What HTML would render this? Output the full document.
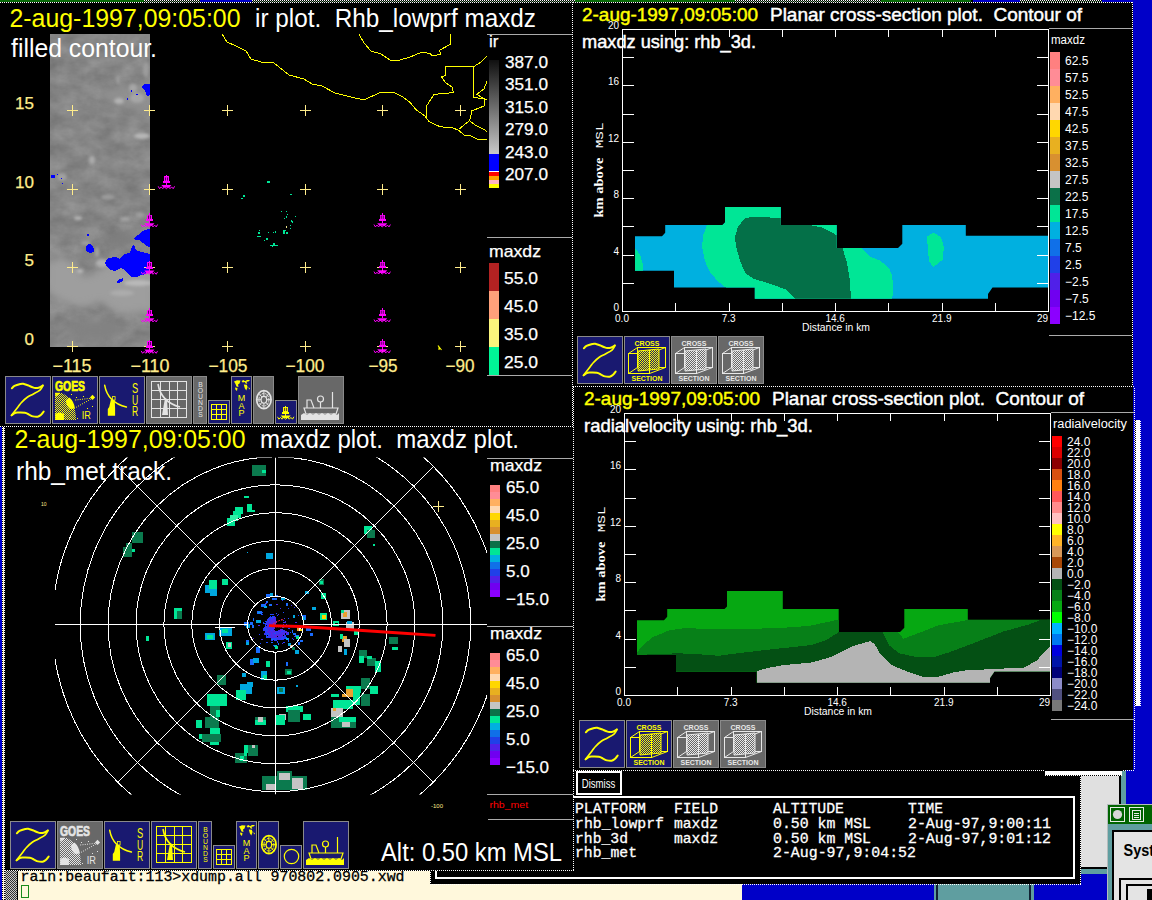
<!DOCTYPE html>
<html><head><meta charset="utf-8"><title>zebra</title>
<style>
html,body{margin:0;padding:0;background:#000;overflow:hidden}
body{width:1152px;height:900px;font-family:"Liberation Sans",sans-serif}
svg{display:block;position:absolute;left:0;top:0}
text{white-space:pre}
</style></head><body>
<svg width="1152" height="900" viewBox="0 0 1152 900">
<rect x="0" y="0" width="1152" height="900" fill="#000" />
<rect x="1133" y="0" width="19" height="806" fill="#0000c8" />
<rect x="0" y="0" width="144" height="2" fill="#0a6a0a" />
<rect x="200" y="0" width="52" height="2" fill="#0000c8" />
<rect x="575" y="0" width="160" height="2" fill="#0a6a0a" />
<rect x="881" y="0" width="90" height="2" fill="#0a6a0a" />
<rect x="973" y="0" width="47" height="2" fill="#0000c8" />
<rect x="1102" y="0" width="50" height="2" fill="#0000c8" />
<line x1="144" y1="0.5" x2="200" y2="0.5" stroke="#fff" stroke-width="1" stroke-dasharray="1,1"/>
<line x1="145" y1="1.5" x2="200" y2="1.5" stroke="#7a7" stroke-width="1" stroke-dasharray="1,1"/>
<line x1="252" y1="0.5" x2="575" y2="0.5" stroke="#fff" stroke-width="1" stroke-dasharray="1,1"/>
<line x1="253" y1="1.5" x2="575" y2="1.5" stroke="#7a7" stroke-width="1" stroke-dasharray="1,1"/>
<line x1="735" y1="0.5" x2="881" y2="0.5" stroke="#fff" stroke-width="1" stroke-dasharray="1,1"/>
<line x1="736" y1="1.5" x2="881" y2="1.5" stroke="#7a7" stroke-width="1" stroke-dasharray="1,1"/>
<line x1="1020" y1="0.5" x2="1102" y2="0.5" stroke="#fff" stroke-width="1" stroke-dasharray="1,1"/>
<line x1="1021" y1="1.5" x2="1102" y2="1.5" stroke="#7a7" stroke-width="1" stroke-dasharray="1,1"/>
<rect x="0" y="870" width="742" height="30" fill="#fff8dc" />
<pattern id="stip" width="2" height="2" patternUnits="userSpaceOnUse"><rect width="2" height="2" fill="#c8c8c8"/><rect width="1" height="1" fill="#303030"/><rect x="1" y="1" width="1" height="1" fill="#303030"/></pattern>
<rect x="5" y="871" width="12" height="29" fill="url(#stip)" />
<rect x="17" y="871" width="1" height="29" fill="#000" />
<clipPath id="termclip"><rect x="18" y="871" width="560" height="29"/></clipPath>
<text x="20.5" y="881" font-size="15" fill="#000" text-anchor="start" font-family="Liberation Mono" font-weight="normal" textLength="384" lengthAdjust="spacingAndGlyphs" clip-path="url(#termclip)" stroke="#000" stroke-width="0.3">rain:beaufait:113&gt;xdump.all 970802.0905.xwd</text>
<rect x="21.5" y="885.5" width="7" height="12" fill="none" stroke="#1a8a1a" stroke-width="1"/>
<rect x="742" y="884" width="192" height="16" fill="#0000c8" />
<rect x="934" y="884" width="100" height="16" fill="#5f9ea0" />
<rect x="936" y="884" width="2" height="16" fill="#123" />
<rect x="1029" y="884" width="2" height="16" fill="#123" />
<rect x="1034" y="884" width="74" height="16" fill="#0000c8" />
<rect x="1081" y="775" width="38" height="92" fill="#e0e0e0" />
<rect x="1119" y="775" width="2" height="30" fill="#000" />
<rect x="1121" y="771" width="5" height="34" fill="#5f9ea0" />
<rect x="1126" y="770" width="8" height="36" fill="#0000c8" />
<rect x="1081" y="867" width="27" height="2" fill="#000" />
<rect x="1081" y="869" width="27" height="5" fill="#5f9ea0" />
<rect x="1081" y="874" width="27" height="26" fill="#0000c8" />
<rect x="1107" y="804" width="45" height="96" fill="#b4bcbc" />
<rect x="1108" y="805" width="44" height="95" fill="#5f9ea0" />
<rect x="1108" y="805" width="44" height="19" fill="#006400" />
<rect x="1110.5" y="807.5" width="14" height="14" fill="#006400" stroke="#e8ece8" stroke-width="1"/>
<circle cx="1117.5" cy="814.5" r="4.6" fill="#d8d8d8"/>
<rect x="1129.5" y="807.5" width="14" height="14" fill="#006400" stroke="#e8ece8" stroke-width="1"/>
<rect x="1132.5" y="810.5" width="8" height="9" fill="none" stroke="#e8ece8" stroke-width="1"/>
<line x1="1134" y1="813.5" x2="1139" y2="813.5" stroke="#e8ece8" stroke-width="1" />
<line x1="1134" y1="815.5" x2="1139" y2="815.5" stroke="#e8ece8" stroke-width="1" />
<line x1="1134" y1="817.5" x2="1139" y2="817.5" stroke="#e8ece8" stroke-width="1" />
<rect x="1112" y="830" width="40" height="70" fill="#000" />
<rect x="1114" y="832" width="38" height="68" fill="#e4e4e4" />
<text x="1123.5" y="855.6" font-size="16.5" fill="#000" text-anchor="start" font-family="Liberation Sans" font-weight="bold" textLength="30.5" lengthAdjust="spacingAndGlyphs" stroke="none">Syst</text>
<rect x="1119" y="878" width="33" height="22" fill="#000" />
<rect x="1121" y="880" width="31" height="20" fill="#e4e4e4" />
<rect x="1126" y="884" width="26" height="16" fill="#000" />
<rect x="1128" y="886" width="24" height="14" fill="#e4e4e4" />
<rect x="1147" y="889" width="5" height="11" fill="#000" />
<defs><filter id="bl1" x="-20%" y="-20%" width="140%" height="140%"><feGaussianBlur stdDeviation="1.6"/></filter><filter id="bl2"><feGaussianBlur stdDeviation="3"/></filter><clipPath id="irclip"><rect x="50" y="34" width="100" height="313"/></clipPath></defs>
<filter id="irtex" x="0" y="0" width="100%" height="100%" color-interpolation-filters="sRGB"><feTurbulence type="fractalNoise" baseFrequency="0.05 0.07" numOctaves="4" seed="11" result="n"/><feColorMatrix in="n" type="matrix" values="0.16 0 0 0 0.445  0.16 0 0 0 0.445  0.16 0 0 0 0.445  0 0 0 0 1"/></filter>
<filter id="bl4"><feGaussianBlur stdDeviation="4"/></filter>
<rect x="50" y="34" width="100" height="313" fill="#868686" shape-rendering="crispEdges"/>
<g clip-path="url(#irclip)">
<rect x="50" y="34" width="100" height="313" fill="#868686" filter="url(#irtex)"/>
<g filter="url(#bl4)">
<polygon points="46.0,262.0 62.0,256.0 74.0,262.0 84.0,276.0 100.0,270.0 112.0,262.0 130.0,268.0 155.0,262.0 155.0,312.0 120.0,314.0 100.0,302.0 80.0,308.0 60.0,302.0 46.0,292.0" fill="#9e9e9e" />
<polygon points="100.0,92.0 120.0,88.0 155.0,84.0 155.0,112.0 125.0,108.0 108.0,102.0" fill="#909090" />
<ellipse cx="91" cy="250" rx="8" ry="8" fill="#7c7c7c"/>
<ellipse cx="120" cy="240" rx="14" ry="7" fill="#7e7e7e"/>
<ellipse cx="95" cy="330" rx="30" ry="10" fill="#828282"/>
</g>
<g filter="url(#bl1)">
<ellipse cx="119" cy="101" rx="5" ry="3" fill="#b8b8b8" opacity="0.9"/>
<ellipse cx="137" cy="98" rx="7" ry="5" fill="#a8a8a8" opacity="0.9"/>
<ellipse cx="146" cy="70" rx="3" ry="8" fill="#a0a0a0" opacity="0.9"/>
<ellipse cx="133" cy="88" rx="4" ry="4" fill="#a8a8a8" opacity="0.9"/>
<ellipse cx="118" cy="80" rx="2" ry="4" fill="#a0a0a0" opacity="0.9"/>
<ellipse cx="142" cy="136" rx="8" ry="3" fill="#bcbcbc" opacity="0.9"/>
<ellipse cx="92" cy="160" rx="3" ry="4" fill="#b0b0b0" opacity="0.9"/>
<ellipse cx="78" cy="218" rx="4" ry="1.5" fill="#c8c8c8" opacity="0.9"/>
<ellipse cx="125" cy="219" rx="5" ry="2" fill="#a8a8a8" opacity="0.9"/>
<ellipse cx="108" cy="197" rx="7" ry="2.5" fill="#a0a0a0" opacity="0.9"/>
<ellipse cx="80" cy="271" rx="3" ry="1.5" fill="#c8c8c8" opacity="0.9"/>
<ellipse cx="138" cy="283" rx="14" ry="3" fill="#bcbcbc" opacity="0.9"/>
<ellipse cx="122" cy="293" rx="12" ry="3" fill="#aeaeae" opacity="0.9"/>
<ellipse cx="102" cy="263" rx="6" ry="4" fill="#b4b4b4" opacity="0.9"/>
<ellipse cx="62" cy="177" rx="5" ry="4" fill="#a4a4a4" opacity="0.9"/>
<ellipse cx="140" cy="215" rx="4" ry="3" fill="#a0a0a0" opacity="0.9"/>
<ellipse cx="86" cy="243" rx="5" ry="2" fill="#a4a4a4" opacity="0.9"/>
<ellipse cx="97" cy="252" rx="2" ry="5" fill="#a8a8a8" opacity="0.9"/>
</g>
<g shape-rendering="crispEdges">
<polygon points="105.0,263.0 108.0,258.0 116.0,257.0 120.0,259.0 124.0,254.0 130.0,253.0 132.0,246.0 134.0,245.0 136.0,250.0 141.0,252.0 146.0,253.0 150.0,254.0 150.0,272.0 146.0,274.0 141.0,275.0 137.0,277.0 131.0,277.0 128.0,274.0 125.0,270.0 121.0,268.0 115.0,271.0 110.0,270.0 107.0,267.0" fill="#0000ff" />
<polygon points="134.0,238.0 138.0,235.0 143.0,231.0 148.0,229.0 150.0,229.0 150.0,247.0 146.0,246.0 143.0,243.0 139.0,240.0 135.0,240.0" fill="#0000ff" />
<polygon points="86.0,246.0 89.0,244.0 92.0,245.0 94.0,249.0 94.0,252.0 90.0,253.0 86.0,251.0" fill="#0000ff" />
<polygon points="117.0,281.0 120.0,279.0 123.0,278.0 123.0,281.0 119.0,283.0 117.0,283.0" fill="#0000ff" />
<rect x="87" y="234" width="2" height="2" fill="#0000ff" />
<polygon points="141.0,87.0 144.0,84.0 150.0,84.5 150.0,95.0 147.0,96.0 146.0,93.0 145.0,91.0 143.0,89.0" fill="#0000ff" />
<rect x="131" y="90" width="1" height="2" fill="#0000ff" />
<rect x="136" y="94" width="2" height="1" fill="#0000ff" />
<rect x="127" y="98" width="1" height="2" fill="#0000ff" />
<rect x="51" y="175" width="4" height="3" fill="#0000ff" />
<rect x="57" y="174" width="1" height="1" fill="#0000ff" />
<rect x="61" y="178" width="1" height="1" fill="#0000ff" />
<rect x="62" y="183" width="1" height="1" fill="#0000ff" />
</g>
</g>
<polyline points="222.0,34.0 227.0,42.0 236.0,46.0 246.0,51.0 251.0,59.0 261.0,62.0 274.0,63.0 289.0,75.0 304.0,79.0 312.0,84.0 322.0,86.0 335.0,93.0 351.0,97.0 364.0,100.0 381.0,92.0 393.0,92.0 403.0,97.0 410.0,102.3 416.1,109.7 424.7,115.8 428.9,121.3 436.9,125.6 444.2,127.4 452.8,127.8 458.9,130.5 464.4,135.4 470.5,135.6 477.9,139.3 486.8,139.6" fill="none" stroke="#ffff00" stroke-width="1" shape-rendering="crispEdges"/>
<polyline points="359.0,34.0 364.0,43.0 371.0,51.0 381.0,54.0 390.0,60.0 400.0,60.0 410.0,57.1 421.6,52.2 429.6,53.4 432.6,55.9 441.2,54.0 439.3,50.4 450.3,44.3 451.0,34.0" fill="none" stroke="#ffff00" stroke-width="1" shape-rendering="crispEdges"/>
<polyline points="486.8,56.1 480.3,62.6 474.2,66.3 445.2,66.3 445.2,75.5 441.5,76.7 445.5,82.8 452.2,87.1 453.4,92.6 439.3,93.8 433.8,94.8 426.5,106.0 426.1,117.0" fill="none" stroke="#ffff00" stroke-width="1" shape-rendering="crispEdges"/>
<polyline points="474.2,66.3 473.6,69.3 473.3,97.5 484.6,98.7 486.8,99.7" fill="none" stroke="#ffff00" stroke-width="1" shape-rendering="crispEdges"/>
<polyline points="486.8,81.6 484.0,88.9 476.6,94.4 480.9,96.8 484.6,99.3 484.0,106.0 471.7,110.9 470.5,117.6 469.3,120.7 458.9,129.2" fill="none" stroke="#ffff00" stroke-width="1" shape-rendering="crispEdges"/>
<polyline points="469.3,120.7 476.0,125.6 484.6,129.9 486.8,131.7" fill="none" stroke="#ffff00" stroke-width="1" shape-rendering="crispEdges"/>
<polyline points="438.0,345.5 439.0,347.0 439.0,350.0 439.5,347.5 441.5,350.0" fill="none" stroke="#ffff00" stroke-width="1.1" />
<line x1="67" y1="110.5" x2="78" y2="110.5" stroke="#ffec8b" stroke-width="1" shape-rendering="crispEdges"/>
<line x1="72.5" y1="105" x2="72.5" y2="116" stroke="#ffec8b" stroke-width="1" shape-rendering="crispEdges"/>
<line x1="67" y1="189.5" x2="78" y2="189.5" stroke="#ffec8b" stroke-width="1" shape-rendering="crispEdges"/>
<line x1="72.5" y1="184" x2="72.5" y2="195" stroke="#ffec8b" stroke-width="1" shape-rendering="crispEdges"/>
<line x1="67" y1="267.5" x2="78" y2="267.5" stroke="#ffec8b" stroke-width="1" shape-rendering="crispEdges"/>
<line x1="72.5" y1="262" x2="72.5" y2="273" stroke="#ffec8b" stroke-width="1" shape-rendering="crispEdges"/>
<line x1="67" y1="346.5" x2="78" y2="346.5" stroke="#ffec8b" stroke-width="1" shape-rendering="crispEdges"/>
<line x1="72.5" y1="341" x2="72.5" y2="352" stroke="#ffec8b" stroke-width="1" shape-rendering="crispEdges"/>
<line x1="144" y1="110.5" x2="155" y2="110.5" stroke="#ffec8b" stroke-width="1" shape-rendering="crispEdges"/>
<line x1="149.5" y1="105" x2="149.5" y2="116" stroke="#ffec8b" stroke-width="1" shape-rendering="crispEdges"/>
<line x1="144" y1="189.5" x2="155" y2="189.5" stroke="#ffec8b" stroke-width="1" shape-rendering="crispEdges"/>
<line x1="149.5" y1="184" x2="149.5" y2="195" stroke="#ffec8b" stroke-width="1" shape-rendering="crispEdges"/>
<line x1="144" y1="267.5" x2="155" y2="267.5" stroke="#ffec8b" stroke-width="1" shape-rendering="crispEdges"/>
<line x1="149.5" y1="262" x2="149.5" y2="273" stroke="#ffec8b" stroke-width="1" shape-rendering="crispEdges"/>
<line x1="144" y1="346.5" x2="155" y2="346.5" stroke="#ffec8b" stroke-width="1" shape-rendering="crispEdges"/>
<line x1="149.5" y1="341" x2="149.5" y2="352" stroke="#ffec8b" stroke-width="1" shape-rendering="crispEdges"/>
<line x1="222" y1="110.5" x2="233" y2="110.5" stroke="#ffec8b" stroke-width="1" shape-rendering="crispEdges"/>
<line x1="227.5" y1="105" x2="227.5" y2="116" stroke="#ffec8b" stroke-width="1" shape-rendering="crispEdges"/>
<line x1="222" y1="189.5" x2="233" y2="189.5" stroke="#ffec8b" stroke-width="1" shape-rendering="crispEdges"/>
<line x1="227.5" y1="184" x2="227.5" y2="195" stroke="#ffec8b" stroke-width="1" shape-rendering="crispEdges"/>
<line x1="222" y1="267.5" x2="233" y2="267.5" stroke="#ffec8b" stroke-width="1" shape-rendering="crispEdges"/>
<line x1="227.5" y1="262" x2="227.5" y2="273" stroke="#ffec8b" stroke-width="1" shape-rendering="crispEdges"/>
<line x1="222" y1="346.5" x2="233" y2="346.5" stroke="#ffec8b" stroke-width="1" shape-rendering="crispEdges"/>
<line x1="227.5" y1="341" x2="227.5" y2="352" stroke="#ffec8b" stroke-width="1" shape-rendering="crispEdges"/>
<line x1="300" y1="110.5" x2="311" y2="110.5" stroke="#ffec8b" stroke-width="1" shape-rendering="crispEdges"/>
<line x1="305.5" y1="105" x2="305.5" y2="116" stroke="#ffec8b" stroke-width="1" shape-rendering="crispEdges"/>
<line x1="300" y1="189.5" x2="311" y2="189.5" stroke="#ffec8b" stroke-width="1" shape-rendering="crispEdges"/>
<line x1="305.5" y1="184" x2="305.5" y2="195" stroke="#ffec8b" stroke-width="1" shape-rendering="crispEdges"/>
<line x1="300" y1="267.5" x2="311" y2="267.5" stroke="#ffec8b" stroke-width="1" shape-rendering="crispEdges"/>
<line x1="305.5" y1="262" x2="305.5" y2="273" stroke="#ffec8b" stroke-width="1" shape-rendering="crispEdges"/>
<line x1="300" y1="346.5" x2="311" y2="346.5" stroke="#ffec8b" stroke-width="1" shape-rendering="crispEdges"/>
<line x1="305.5" y1="341" x2="305.5" y2="352" stroke="#ffec8b" stroke-width="1" shape-rendering="crispEdges"/>
<line x1="377" y1="110.5" x2="388" y2="110.5" stroke="#ffec8b" stroke-width="1" shape-rendering="crispEdges"/>
<line x1="382.5" y1="105" x2="382.5" y2="116" stroke="#ffec8b" stroke-width="1" shape-rendering="crispEdges"/>
<line x1="377" y1="189.5" x2="388" y2="189.5" stroke="#ffec8b" stroke-width="1" shape-rendering="crispEdges"/>
<line x1="382.5" y1="184" x2="382.5" y2="195" stroke="#ffec8b" stroke-width="1" shape-rendering="crispEdges"/>
<line x1="377" y1="267.5" x2="388" y2="267.5" stroke="#ffec8b" stroke-width="1" shape-rendering="crispEdges"/>
<line x1="382.5" y1="262" x2="382.5" y2="273" stroke="#ffec8b" stroke-width="1" shape-rendering="crispEdges"/>
<line x1="377" y1="346.5" x2="388" y2="346.5" stroke="#ffec8b" stroke-width="1" shape-rendering="crispEdges"/>
<line x1="382.5" y1="341" x2="382.5" y2="352" stroke="#ffec8b" stroke-width="1" shape-rendering="crispEdges"/>
<line x1="455" y1="110.5" x2="466" y2="110.5" stroke="#ffec8b" stroke-width="1" shape-rendering="crispEdges"/>
<line x1="460.5" y1="105" x2="460.5" y2="116" stroke="#ffec8b" stroke-width="1" shape-rendering="crispEdges"/>
<line x1="455" y1="189.5" x2="466" y2="189.5" stroke="#ffec8b" stroke-width="1" shape-rendering="crispEdges"/>
<line x1="460.5" y1="184" x2="460.5" y2="195" stroke="#ffec8b" stroke-width="1" shape-rendering="crispEdges"/>
<line x1="455" y1="267.5" x2="466" y2="267.5" stroke="#ffec8b" stroke-width="1" shape-rendering="crispEdges"/>
<line x1="460.5" y1="262" x2="460.5" y2="273" stroke="#ffec8b" stroke-width="1" shape-rendering="crispEdges"/>
<line x1="455" y1="346.5" x2="466" y2="346.5" stroke="#ffec8b" stroke-width="1" shape-rendering="crispEdges"/>
<line x1="460.5" y1="341" x2="460.5" y2="352" stroke="#ffec8b" stroke-width="1" shape-rendering="crispEdges"/>
<rect x="165.9" y="175" width="1" height="1.5" fill="#ff00ff" shape-rendering="crispEdges"/>
<rect x="163.9" y="176.3" width="5" height="4.9" fill="#ff00ff" shape-rendering="crispEdges"/>
<rect x="165.0" y="177.4" width="0.8" height="3.2" fill="#30003a" />
<rect x="167.0" y="177.4" width="0.8" height="3.2" fill="#30003a" />
<rect x="162.9" y="181" width="7" height="2" fill="#ff00ff" shape-rendering="crispEdges"/>
<rect x="165.9" y="183" width="1" height="2" fill="#ff00ff" shape-rendering="crispEdges"/>
<polygon points="161.4,185.0 171.4,185.0 169.4,187.6 163.4,187.6" fill="#ff00ff" />
<path d="M158.20000000000002,186.3 l1.4,2.4 l1.6,-1.8 l1.6,1.8 l1.6,-1.8 l2,1.8 l2,-1.8 l1.6,1.8 l1.6,-1.8 l1.6,1.8 l1.4,-2.4" fill="none" stroke="#ff00ff" stroke-width="1"/>
<rect x="148.9" y="213.2" width="1" height="1.5" fill="#ff00ff" shape-rendering="crispEdges"/>
<rect x="146.9" y="214.5" width="5" height="4.9" fill="#ff00ff" shape-rendering="crispEdges"/>
<rect x="148.0" y="215.6" width="0.8" height="3.2" fill="#30003a" />
<rect x="150.0" y="215.6" width="0.8" height="3.2" fill="#30003a" />
<rect x="145.9" y="219.2" width="7" height="2" fill="#ff00ff" shape-rendering="crispEdges"/>
<rect x="148.9" y="221.2" width="1" height="2" fill="#ff00ff" shape-rendering="crispEdges"/>
<polygon points="144.4,223.2 154.4,223.2 152.4,225.8 146.4,225.8" fill="#ff00ff" />
<path d="M141.20000000000002,224.5 l1.4,2.4 l1.6,-1.8 l1.6,1.8 l1.6,-1.8 l2,1.8 l2,-1.8 l1.6,1.8 l1.6,-1.8 l1.6,1.8 l1.4,-2.4" fill="none" stroke="#ff00ff" stroke-width="1"/>
<rect x="148.9" y="260.6" width="1" height="1.5" fill="#ff00ff" shape-rendering="crispEdges"/>
<rect x="146.9" y="261.90000000000003" width="5" height="4.9" fill="#ff00ff" shape-rendering="crispEdges"/>
<rect x="148.0" y="263.0" width="0.8" height="3.2" fill="#30003a" />
<rect x="150.0" y="263.0" width="0.8" height="3.2" fill="#30003a" />
<rect x="145.9" y="266.6" width="7" height="2" fill="#ff00ff" shape-rendering="crispEdges"/>
<rect x="148.9" y="268.6" width="1" height="2" fill="#ff00ff" shape-rendering="crispEdges"/>
<polygon points="144.4,270.6 154.4,270.6 152.4,273.2 146.4,273.2" fill="#ff00ff" />
<path d="M141.20000000000002,271.90000000000003 l1.4,2.4 l1.6,-1.8 l1.6,1.8 l1.6,-1.8 l2,1.8 l2,-1.8 l1.6,1.8 l1.6,-1.8 l1.6,1.8 l1.4,-2.4" fill="none" stroke="#ff00ff" stroke-width="1"/>
<rect x="148.9" y="308.2" width="1" height="1.5" fill="#ff00ff" shape-rendering="crispEdges"/>
<rect x="146.9" y="309.5" width="5" height="4.9" fill="#ff00ff" shape-rendering="crispEdges"/>
<rect x="148.0" y="310.59999999999997" width="0.8" height="3.2" fill="#30003a" />
<rect x="150.0" y="310.59999999999997" width="0.8" height="3.2" fill="#30003a" />
<rect x="145.9" y="314.2" width="7" height="2" fill="#ff00ff" shape-rendering="crispEdges"/>
<rect x="148.9" y="316.2" width="1" height="2" fill="#ff00ff" shape-rendering="crispEdges"/>
<polygon points="144.4,318.2 154.4,318.2 152.4,320.8 146.4,320.8" fill="#ff00ff" />
<path d="M141.20000000000002,319.5 l1.4,2.4 l1.6,-1.8 l1.6,1.8 l1.6,-1.8 l2,1.8 l2,-1.8 l1.6,1.8 l1.6,-1.8 l1.6,1.8 l1.4,-2.4" fill="none" stroke="#ff00ff" stroke-width="1"/>
<rect x="148.9" y="339.6" width="1" height="1.5" fill="#ff00ff" shape-rendering="crispEdges"/>
<rect x="146.9" y="340.90000000000003" width="5" height="4.9" fill="#ff00ff" shape-rendering="crispEdges"/>
<rect x="148.0" y="342.0" width="0.8" height="3.2" fill="#30003a" />
<rect x="150.0" y="342.0" width="0.8" height="3.2" fill="#30003a" />
<rect x="145.9" y="345.6" width="7" height="2" fill="#ff00ff" shape-rendering="crispEdges"/>
<rect x="148.9" y="347.6" width="1" height="2" fill="#ff00ff" shape-rendering="crispEdges"/>
<polygon points="144.4,349.6 154.4,349.6 152.4,352.2 146.4,352.2" fill="#ff00ff" />
<path d="M141.20000000000002,350.90000000000003 l1.4,2.4 l1.6,-1.8 l1.6,1.8 l1.6,-1.8 l2,1.8 l2,-1.8 l1.6,1.8 l1.6,-1.8 l1.6,1.8 l1.4,-2.4" fill="none" stroke="#ff00ff" stroke-width="1"/>
<rect x="381.7" y="213.2" width="1" height="1.5" fill="#ff00ff" shape-rendering="crispEdges"/>
<rect x="379.7" y="214.5" width="5" height="4.9" fill="#ff00ff" shape-rendering="crispEdges"/>
<rect x="380.8" y="215.6" width="0.8" height="3.2" fill="#30003a" />
<rect x="382.8" y="215.6" width="0.8" height="3.2" fill="#30003a" />
<rect x="378.7" y="219.2" width="7" height="2" fill="#ff00ff" shape-rendering="crispEdges"/>
<rect x="381.7" y="221.2" width="1" height="2" fill="#ff00ff" shape-rendering="crispEdges"/>
<polygon points="377.2,223.2 387.2,223.2 385.2,225.8 379.2,225.8" fill="#ff00ff" />
<path d="M374.0,224.5 l1.4,2.4 l1.6,-1.8 l1.6,1.8 l1.6,-1.8 l2,1.8 l2,-1.8 l1.6,1.8 l1.6,-1.8 l1.6,1.8 l1.4,-2.4" fill="none" stroke="#ff00ff" stroke-width="1"/>
<rect x="381.7" y="260.3" width="1" height="1.5" fill="#ff00ff" shape-rendering="crispEdges"/>
<rect x="379.7" y="261.6" width="5" height="4.9" fill="#ff00ff" shape-rendering="crispEdges"/>
<rect x="380.8" y="262.7" width="0.8" height="3.2" fill="#30003a" />
<rect x="382.8" y="262.7" width="0.8" height="3.2" fill="#30003a" />
<rect x="378.7" y="266.3" width="7" height="2" fill="#ff00ff" shape-rendering="crispEdges"/>
<rect x="381.7" y="268.3" width="1" height="2" fill="#ff00ff" shape-rendering="crispEdges"/>
<polygon points="377.2,270.3 387.2,270.3 385.2,272.9 379.2,272.9" fill="#ff00ff" />
<path d="M374.0,271.6 l1.4,2.4 l1.6,-1.8 l1.6,1.8 l1.6,-1.8 l2,1.8 l2,-1.8 l1.6,1.8 l1.6,-1.8 l1.6,1.8 l1.4,-2.4" fill="none" stroke="#ff00ff" stroke-width="1"/>
<rect x="381.7" y="308.2" width="1" height="1.5" fill="#ff00ff" shape-rendering="crispEdges"/>
<rect x="379.7" y="309.5" width="5" height="4.9" fill="#ff00ff" shape-rendering="crispEdges"/>
<rect x="380.8" y="310.59999999999997" width="0.8" height="3.2" fill="#30003a" />
<rect x="382.8" y="310.59999999999997" width="0.8" height="3.2" fill="#30003a" />
<rect x="378.7" y="314.2" width="7" height="2" fill="#ff00ff" shape-rendering="crispEdges"/>
<rect x="381.7" y="316.2" width="1" height="2" fill="#ff00ff" shape-rendering="crispEdges"/>
<polygon points="377.2,318.2 387.2,318.2 385.2,320.8 379.2,320.8" fill="#ff00ff" />
<path d="M374.0,319.5 l1.4,2.4 l1.6,-1.8 l1.6,1.8 l1.6,-1.8 l2,1.8 l2,-1.8 l1.6,1.8 l1.6,-1.8 l1.6,1.8 l1.4,-2.4" fill="none" stroke="#ff00ff" stroke-width="1"/>
<rect x="381.7" y="339.2" width="1" height="1.5" fill="#ff00ff" shape-rendering="crispEdges"/>
<rect x="379.7" y="340.5" width="5" height="4.9" fill="#ff00ff" shape-rendering="crispEdges"/>
<rect x="380.8" y="341.59999999999997" width="0.8" height="3.2" fill="#30003a" />
<rect x="382.8" y="341.59999999999997" width="0.8" height="3.2" fill="#30003a" />
<rect x="378.7" y="345.2" width="7" height="2" fill="#ff00ff" shape-rendering="crispEdges"/>
<rect x="381.7" y="347.2" width="1" height="2" fill="#ff00ff" shape-rendering="crispEdges"/>
<polygon points="377.2,349.2 387.2,349.2 385.2,351.8 379.2,351.8" fill="#ff00ff" />
<path d="M374.0,350.5 l1.4,2.4 l1.6,-1.8 l1.6,1.8 l1.6,-1.8 l2,1.8 l2,-1.8 l1.6,1.8 l1.6,-1.8 l1.6,1.8 l1.4,-2.4" fill="none" stroke="#ff00ff" stroke-width="1"/>
<g shape-rendering="crispEdges">
<rect x="267" y="181" width="3" height="2" fill="#00e696" />
<rect x="243" y="195" width="2" height="2" fill="#00e696" />
<rect x="241" y="198" width="2" height="1" fill="#00e696" />
<rect x="290" y="194" width="2" height="1" fill="#00e696" />
<rect x="281" y="211" width="1" height="1" fill="#00e696" />
<rect x="286" y="211" width="1" height="1" fill="#00e696" />
<rect x="287" y="214" width="1" height="1" fill="#00e696" />
<rect x="286" y="216" width="1" height="2" fill="#00e696" />
<rect x="284" y="218" width="1" height="1" fill="#00e696" />
<rect x="295" y="216" width="1" height="1" fill="#00e696" />
<rect x="291" y="220" width="1" height="2" fill="#00e696" />
<rect x="292" y="221" width="1" height="2" fill="#00e696" />
<rect x="290" y="225" width="1" height="1" fill="#00e696" />
<rect x="290" y="228" width="1" height="1" fill="#00e696" />
<rect x="283" y="230" width="2" height="4" fill="#00e696" />
<rect x="284.5" y="230" width="1.5" height="1" fill="#00e696" />
<rect x="286" y="232" width="2" height="2" fill="#00e696" />
<rect x="259" y="230" width="1" height="1" fill="#00e696" />
<rect x="258" y="232" width="2" height="2" fill="#00e696" />
<rect x="257" y="236" width="4" height="1" fill="#00e696" />
<rect x="268" y="232" width="1" height="1" fill="#00e696" />
<rect x="273" y="232" width="1" height="1" fill="#00e696" />
<rect x="275" y="231" width="1" height="2" fill="#00e696" />
<rect x="266" y="238" width="2" height="2" fill="#00e696" />
<rect x="264" y="240" width="1" height="1" fill="#00e696" />
<rect x="270" y="244.5" width="8" height="1.5" fill="#00e696" />
<rect x="273" y="243" width="2" height="2" fill="#00e696" />
<rect x="272" y="246" width="1" height="1" fill="#00e696" />
<rect x="286" y="226" width="1" height="2" fill="#f0e68c" />
</g>
<text x="34" y="109" font-size="17" fill="#ffec8b" text-anchor="end" font-family="Liberation Sans" font-weight="normal" stroke="#ffec8b" stroke-width="0.25" >15</text>
<text x="34" y="188" font-size="17" fill="#ffec8b" text-anchor="end" font-family="Liberation Sans" font-weight="normal" stroke="#ffec8b" stroke-width="0.25" >10</text>
<text x="34" y="266" font-size="17" fill="#ffec8b" text-anchor="end" font-family="Liberation Sans" font-weight="normal" stroke="#ffec8b" stroke-width="0.25" >5</text>
<text x="34" y="345" font-size="17" fill="#ffec8b" text-anchor="end" font-family="Liberation Sans" font-weight="normal" stroke="#ffec8b" stroke-width="0.25" >0</text>
<text x="72" y="372" font-size="17.5" fill="#ffec8b" text-anchor="middle" font-family="Liberation Sans" font-weight="normal" textLength="39" lengthAdjust="spacingAndGlyphs" stroke="#ffec8b" stroke-width="0.25" >−115</text>
<text x="150" y="372" font-size="17.5" fill="#ffec8b" text-anchor="middle" font-family="Liberation Sans" font-weight="normal" textLength="39" lengthAdjust="spacingAndGlyphs" stroke="#ffec8b" stroke-width="0.25" >−110</text>
<text x="228" y="372" font-size="17.5" fill="#ffec8b" text-anchor="middle" font-family="Liberation Sans" font-weight="normal" textLength="39" lengthAdjust="spacingAndGlyphs" stroke="#ffec8b" stroke-width="0.25" >−105</text>
<text x="305" y="372" font-size="17.5" fill="#ffec8b" text-anchor="middle" font-family="Liberation Sans" font-weight="normal" textLength="39" lengthAdjust="spacingAndGlyphs" stroke="#ffec8b" stroke-width="0.25" >−100</text>
<text x="383" y="372" font-size="17.5" fill="#ffec8b" text-anchor="middle" font-family="Liberation Sans" font-weight="normal" textLength="29" lengthAdjust="spacingAndGlyphs" stroke="#ffec8b" stroke-width="0.25" >−95</text>
<text x="460" y="372" font-size="17.5" fill="#ffec8b" text-anchor="middle" font-family="Liberation Sans" font-weight="normal" textLength="29" lengthAdjust="spacingAndGlyphs" stroke="#ffec8b" stroke-width="0.25" >−90</text>
<text x="9.5" y="27" font-size="25.5" fill="#ffff00" text-anchor="start" font-family="Liberation Sans" font-weight="normal" textLength="231" lengthAdjust="spacingAndGlyphs" stroke="#ffff00" stroke-width="0" >2-aug-1997,09:05:00</text>
<text x="255" y="27" font-size="25.5" fill="#fff" text-anchor="start" font-family="Liberation Sans" font-weight="normal" textLength="281" lengthAdjust="spacingAndGlyphs" stroke="#fff" stroke-width="0" >ir plot.  Rhb_lowprf maxdz</text>
<text x="11" y="56.7" font-size="25.5" fill="#fff" text-anchor="start" font-family="Liberation Sans" font-weight="normal" textLength="146" lengthAdjust="spacingAndGlyphs" stroke="#fff" stroke-width="0" >filled contour.</text>
<line x1="487" y1="34.5" x2="572" y2="34.5" stroke="#aaa" stroke-width="1" />
<text x="489" y="47" font-size="17" fill="#fff" text-anchor="start" font-family="Liberation Sans" font-weight="normal" stroke="#fff" stroke-width="0.25" >ir</text>
<linearGradient id="irg" x1="0" y1="0" x2="0" y2="1"><stop offset="0" stop-color="#101010"/><stop offset="1" stop-color="#c8c8c8"/></linearGradient>
<rect x="489" y="60" width="10" height="94" fill="url(#irg)" />
<rect x="489" y="154" width="10" height="17" fill="#0000ff" />
<rect x="489" y="171" width="10" height="1" fill="#fff" />
<rect x="489" y="172" width="10" height="4" fill="#f00" />
<rect x="489" y="176" width="10" height="4" fill="#ffa000" />
<rect x="489" y="180" width="10" height="4" fill="#ffb6c1" />
<rect x="489" y="184" width="10" height="4" fill="#ffff00" />
<text x="505" y="68.0" font-size="17" fill="#fff" text-anchor="start" font-family="Liberation Sans" font-weight="normal" textLength="43" lengthAdjust="spacingAndGlyphs" stroke="#fff" stroke-width="0.25" >387.0</text>
<text x="505" y="90.4" font-size="17" fill="#fff" text-anchor="start" font-family="Liberation Sans" font-weight="normal" textLength="43" lengthAdjust="spacingAndGlyphs" stroke="#fff" stroke-width="0.25" >351.0</text>
<text x="505" y="112.8" font-size="17" fill="#fff" text-anchor="start" font-family="Liberation Sans" font-weight="normal" textLength="43" lengthAdjust="spacingAndGlyphs" stroke="#fff" stroke-width="0.25" >315.0</text>
<text x="505" y="135.2" font-size="17" fill="#fff" text-anchor="start" font-family="Liberation Sans" font-weight="normal" textLength="43" lengthAdjust="spacingAndGlyphs" stroke="#fff" stroke-width="0.25" >279.0</text>
<text x="505" y="157.6" font-size="17" fill="#fff" text-anchor="start" font-family="Liberation Sans" font-weight="normal" textLength="43" lengthAdjust="spacingAndGlyphs" stroke="#fff" stroke-width="0.25" >243.0</text>
<text x="505" y="180.0" font-size="17" fill="#fff" text-anchor="start" font-family="Liberation Sans" font-weight="normal" textLength="43" lengthAdjust="spacingAndGlyphs" stroke="#fff" stroke-width="0.25" >207.0</text>
<line x1="487" y1="237.5" x2="572" y2="237.5" stroke="#aaa" stroke-width="1" />
<text x="489" y="257" font-size="17" fill="#fff" text-anchor="start" font-family="Liberation Sans" font-weight="normal" textLength="52" lengthAdjust="spacingAndGlyphs" stroke="#fff" stroke-width="0.25" >maxdz</text>
<rect x="489" y="263" width="10" height="28" fill="#b22222" />
<text x="504" y="284" font-size="17" fill="#fff" text-anchor="start" font-family="Liberation Sans" font-weight="normal" textLength="34" lengthAdjust="spacingAndGlyphs" stroke="#fff" stroke-width="0.25" >55.0</text>
<rect x="489" y="291" width="10" height="28" fill="#ffa07a" />
<text x="504" y="312" font-size="17" fill="#fff" text-anchor="start" font-family="Liberation Sans" font-weight="normal" textLength="34" lengthAdjust="spacingAndGlyphs" stroke="#fff" stroke-width="0.25" >45.0</text>
<rect x="489" y="319" width="10" height="28" fill="#fbf57c" />
<text x="504" y="340" font-size="17" fill="#fff" text-anchor="start" font-family="Liberation Sans" font-weight="normal" textLength="34" lengthAdjust="spacingAndGlyphs" stroke="#fff" stroke-width="0.25" >35.0</text>
<rect x="489" y="347" width="10" height="28" fill="#00f596" />
<text x="504" y="368" font-size="17" fill="#fff" text-anchor="start" font-family="Liberation Sans" font-weight="normal" textLength="34" lengthAdjust="spacingAndGlyphs" stroke="#fff" stroke-width="0.25" >25.0</text>
<line x1="487" y1="375.5" x2="572" y2="375.5" stroke="#aaa" stroke-width="1" />
<defs><clipPath id="xs1"><polygon points="635,236.25 662,236.25 665.2,232.7 665.2,225 722.5,225 725,222.5 725,207 780.8,207 780.8,225 836.7,225 836.7,248 898,248 902.3,243.75 902.3,225 965.8,225 965.8,235.8 1048.75,235.8 1048.75,287.5 992.5,287.5 988,294 988,298.75 754.8,298.75 754.8,287.5 674,287.5 674,270.8 635,270.8"/></clipPath></defs>
<g clip-path="url(#xs1)" shape-rendering="crispEdges">
<rect x="630" y="200" width="425" height="105" fill="#00b0e0" />
<polygon points="725.0,200.0 785.0,200.0 785.0,225.0 840.0,225.0 840.0,248.0 861.7,248.0 870.0,256.7 880.4,260.8 888.8,268.0 892.3,275.4 893.0,292.0 892.0,300.0 725.6,300.0 725.6,287.5 718.3,281.7 710.0,272.3 704.8,260.8 702.0,246.2 703.3,234.8 706.9,225.4 722.5,223.3" fill="#00e696" />
<polygon points="635.0,248.0 640.0,254.6 643.0,265.0 643.0,272.0 634.0,272.0" fill="#00e696" />
<polygon points="927.3,236.2 933.5,232.7 940.8,236.9 944.0,247.3 942.5,259.8 933.5,267.0 929.4,261.9 927.7,250.4" fill="#00e696" />
<polygon points="745.4,218.0 753.8,216.7 780.8,218.0 781.0,225.0 810.0,225.0 822.0,227.5 830.8,231.7 836.7,235.4 836.7,248.0 842.5,248.0 847.0,263.0 850.2,281.7 850.8,300.0 796.9,300.0 787.0,290.0 776.7,286.2 764.0,281.7 753.8,279.0 745.4,273.3 740.0,260.8 736.0,246.2 735.0,236.9 738.0,226.5" fill="#047048" />
</g>
<text x="582" y="21" font-size="18.5" fill="#ffff00" text-anchor="start" font-family="Liberation Sans" font-weight="normal" textLength="176" lengthAdjust="spacingAndGlyphs" stroke="#ffff00" stroke-width="0.45">2-aug-1997,09:05:00</text>
<text x="770" y="21" font-size="18.5" fill="#fff" text-anchor="start" font-family="Liberation Sans" font-weight="normal" textLength="312" lengthAdjust="spacingAndGlyphs" stroke="#fff" stroke-width="0.45">Planar cross-section plot.  Contour of</text>
<text x="582" y="48" font-size="18.5" fill="#fff" text-anchor="start" font-family="Liberation Sans" font-weight="normal" textLength="174" lengthAdjust="spacingAndGlyphs" stroke="#fff" stroke-width="0.45">maxdz using: rhb_3d.</text>
<line x1="1049" y1="28.5" x2="1132" y2="28.5" stroke="#aaa" stroke-width="1" />
<line x1="1049" y1="335.5" x2="1132" y2="335.5" stroke="#aaa" stroke-width="1" />
<text x="1051" y="44" font-size="12" fill="#fff" text-anchor="start" font-family="Liberation Sans" font-weight="normal" textLength="34" lengthAdjust="spacingAndGlyphs" >maxdz</text>
<rect x="1050" y="52" width="10" height="17" fill="#ff8080" shape-rendering="crispEdges"/>
<rect x="1050" y="69" width="10" height="17" fill="#ff8c96" shape-rendering="crispEdges"/>
<rect x="1050" y="86" width="10" height="17" fill="#ffb060" shape-rendering="crispEdges"/>
<rect x="1050" y="103" width="10" height="17" fill="#ffd8b0" shape-rendering="crispEdges"/>
<rect x="1050" y="120" width="10" height="17" fill="#ffd700" shape-rendering="crispEdges"/>
<rect x="1050" y="137" width="10" height="17" fill="#e8b020" shape-rendering="crispEdges"/>
<rect x="1050" y="154" width="10" height="17" fill="#d89030" shape-rendering="crispEdges"/>
<rect x="1050" y="171" width="10" height="17" fill="#c4c4c4" shape-rendering="crispEdges"/>
<rect x="1050" y="188" width="10" height="17" fill="#0b7048" shape-rendering="crispEdges"/>
<rect x="1050" y="205" width="10" height="17" fill="#00e696" shape-rendering="crispEdges"/>
<rect x="1050" y="222" width="10" height="17" fill="#00b0e0" shape-rendering="crispEdges"/>
<rect x="1050" y="239" width="10" height="17" fill="#1070e8" shape-rendering="crispEdges"/>
<rect x="1050" y="256" width="10" height="17" fill="#2040e8" shape-rendering="crispEdges"/>
<rect x="1050" y="273" width="10" height="17" fill="#5020e8" shape-rendering="crispEdges"/>
<rect x="1050" y="290" width="10" height="17" fill="#7000f0" shape-rendering="crispEdges"/>
<rect x="1050" y="307" width="10" height="17" fill="#8c00ff" shape-rendering="crispEdges"/>
<text x="1065" y="65" font-size="12" fill="#fff" text-anchor="start" font-family="Liberation Sans" font-weight="normal" >62.5</text>
<text x="1065" y="82" font-size="12" fill="#fff" text-anchor="start" font-family="Liberation Sans" font-weight="normal" >57.5</text>
<text x="1065" y="99" font-size="12" fill="#fff" text-anchor="start" font-family="Liberation Sans" font-weight="normal" >52.5</text>
<text x="1065" y="116" font-size="12" fill="#fff" text-anchor="start" font-family="Liberation Sans" font-weight="normal" >47.5</text>
<text x="1065" y="133" font-size="12" fill="#fff" text-anchor="start" font-family="Liberation Sans" font-weight="normal" >42.5</text>
<text x="1065" y="150" font-size="12" fill="#fff" text-anchor="start" font-family="Liberation Sans" font-weight="normal" >37.5</text>
<text x="1065" y="167" font-size="12" fill="#fff" text-anchor="start" font-family="Liberation Sans" font-weight="normal" >32.5</text>
<text x="1065" y="184" font-size="12" fill="#fff" text-anchor="start" font-family="Liberation Sans" font-weight="normal" >27.5</text>
<text x="1065" y="201" font-size="12" fill="#fff" text-anchor="start" font-family="Liberation Sans" font-weight="normal" >22.5</text>
<text x="1065" y="218" font-size="12" fill="#fff" text-anchor="start" font-family="Liberation Sans" font-weight="normal" >17.5</text>
<text x="1065" y="235" font-size="12" fill="#fff" text-anchor="start" font-family="Liberation Sans" font-weight="normal" >12.5</text>
<text x="1065" y="252" font-size="12" fill="#fff" text-anchor="start" font-family="Liberation Sans" font-weight="normal" >7.5</text>
<text x="1065" y="269" font-size="12" fill="#fff" text-anchor="start" font-family="Liberation Sans" font-weight="normal" >2.5</text>
<text x="1065" y="286" font-size="12" fill="#fff" text-anchor="start" font-family="Liberation Sans" font-weight="normal" >−2.5</text>
<text x="1065" y="303" font-size="12" fill="#fff" text-anchor="start" font-family="Liberation Sans" font-weight="normal" >−7.5</text>
<text x="1065" y="320" font-size="12" fill="#fff" text-anchor="start" font-family="Liberation Sans" font-weight="normal" >−12.5</text>
<line x1="622.5" y1="29" x2="622.5" y2="312" stroke="#fff" stroke-width="1" shape-rendering="crispEdges"/>
<line x1="1048.5" y1="29" x2="1048.5" y2="312" stroke="#fff" stroke-width="1" shape-rendering="crispEdges"/>
<line x1="622" y1="29.5" x2="1048" y2="29.5" stroke="#fff" stroke-width="1" shape-rendering="crispEdges"/>
<line x1="622" y1="311.5" x2="1049" y2="311.5" stroke="#fff" stroke-width="1" shape-rendering="crispEdges"/>
<line x1="675.5" y1="29" x2="675.5" y2="37" stroke="#fff" stroke-width="1" shape-rendering="crispEdges"/>
<line x1="675.5" y1="303" x2="675.5" y2="311" stroke="#fff" stroke-width="1" shape-rendering="crispEdges"/>
<line x1="729.5" y1="29" x2="729.5" y2="37" stroke="#fff" stroke-width="1" shape-rendering="crispEdges"/>
<line x1="729.5" y1="303" x2="729.5" y2="311" stroke="#fff" stroke-width="1" shape-rendering="crispEdges"/>
<line x1="782.5" y1="29" x2="782.5" y2="37" stroke="#fff" stroke-width="1" shape-rendering="crispEdges"/>
<line x1="782.5" y1="303" x2="782.5" y2="311" stroke="#fff" stroke-width="1" shape-rendering="crispEdges"/>
<line x1="835.5" y1="29" x2="835.5" y2="37" stroke="#fff" stroke-width="1" shape-rendering="crispEdges"/>
<line x1="835.5" y1="303" x2="835.5" y2="311" stroke="#fff" stroke-width="1" shape-rendering="crispEdges"/>
<line x1="888.5" y1="29" x2="888.5" y2="37" stroke="#fff" stroke-width="1" shape-rendering="crispEdges"/>
<line x1="888.5" y1="303" x2="888.5" y2="311" stroke="#fff" stroke-width="1" shape-rendering="crispEdges"/>
<line x1="942.5" y1="29" x2="942.5" y2="37" stroke="#fff" stroke-width="1" shape-rendering="crispEdges"/>
<line x1="942.5" y1="303" x2="942.5" y2="311" stroke="#fff" stroke-width="1" shape-rendering="crispEdges"/>
<line x1="995.5" y1="29" x2="995.5" y2="37" stroke="#fff" stroke-width="1" shape-rendering="crispEdges"/>
<line x1="995.5" y1="303" x2="995.5" y2="311" stroke="#fff" stroke-width="1" shape-rendering="crispEdges"/>
<line x1="622" y1="283.5" x2="634" y2="283.5" stroke="#fff" stroke-width="1" shape-rendering="crispEdges"/>
<line x1="1037" y1="283.5" x2="1048" y2="283.5" stroke="#fff" stroke-width="1" shape-rendering="crispEdges"/>
<line x1="622" y1="255.5" x2="634" y2="255.5" stroke="#fff" stroke-width="1" shape-rendering="crispEdges"/>
<line x1="1037" y1="255.5" x2="1048" y2="255.5" stroke="#fff" stroke-width="1" shape-rendering="crispEdges"/>
<line x1="622" y1="226.5" x2="634" y2="226.5" stroke="#fff" stroke-width="1" shape-rendering="crispEdges"/>
<line x1="1037" y1="226.5" x2="1048" y2="226.5" stroke="#fff" stroke-width="1" shape-rendering="crispEdges"/>
<line x1="622" y1="198.5" x2="634" y2="198.5" stroke="#fff" stroke-width="1" shape-rendering="crispEdges"/>
<line x1="1037" y1="198.5" x2="1048" y2="198.5" stroke="#fff" stroke-width="1" shape-rendering="crispEdges"/>
<line x1="622" y1="170.5" x2="634" y2="170.5" stroke="#fff" stroke-width="1" shape-rendering="crispEdges"/>
<line x1="1037" y1="170.5" x2="1048" y2="170.5" stroke="#fff" stroke-width="1" shape-rendering="crispEdges"/>
<line x1="622" y1="142.5" x2="634" y2="142.5" stroke="#fff" stroke-width="1" shape-rendering="crispEdges"/>
<line x1="1037" y1="142.5" x2="1048" y2="142.5" stroke="#fff" stroke-width="1" shape-rendering="crispEdges"/>
<line x1="622" y1="114.5" x2="634" y2="114.5" stroke="#fff" stroke-width="1" shape-rendering="crispEdges"/>
<line x1="1037" y1="114.5" x2="1048" y2="114.5" stroke="#fff" stroke-width="1" shape-rendering="crispEdges"/>
<line x1="622" y1="85.5" x2="634" y2="85.5" stroke="#fff" stroke-width="1" shape-rendering="crispEdges"/>
<line x1="1037" y1="85.5" x2="1048" y2="85.5" stroke="#fff" stroke-width="1" shape-rendering="crispEdges"/>
<line x1="622" y1="57.5" x2="634" y2="57.5" stroke="#fff" stroke-width="1" shape-rendering="crispEdges"/>
<line x1="1037" y1="57.5" x2="1048" y2="57.5" stroke="#fff" stroke-width="1" shape-rendering="crispEdges"/>
<text x="619" y="311.3" font-size="10" fill="#fff" text-anchor="end" font-family="Liberation Sans" font-weight="normal" >0</text>
<text x="619" y="255.3" font-size="10" fill="#fff" text-anchor="end" font-family="Liberation Sans" font-weight="normal" >4</text>
<text x="619" y="198.3" font-size="10" fill="#fff" text-anchor="end" font-family="Liberation Sans" font-weight="normal" >8</text>
<text x="619" y="142.3" font-size="10" fill="#fff" text-anchor="end" font-family="Liberation Sans" font-weight="normal" >12</text>
<text x="619" y="85.3" font-size="10" fill="#fff" text-anchor="end" font-family="Liberation Sans" font-weight="normal" >16</text>
<text x="619" y="29.3" font-size="10" fill="#fff" text-anchor="end" font-family="Liberation Sans" font-weight="normal" >20</text>
<text x="622.0" y="321.8" font-size="10" fill="#fff" text-anchor="middle" font-family="Liberation Sans" font-weight="normal" >0.0</text>
<text x="728.6" y="321.8" font-size="10" fill="#fff" text-anchor="middle" font-family="Liberation Sans" font-weight="normal" >7.3</text>
<text x="835.2" y="321.8" font-size="10" fill="#fff" text-anchor="middle" font-family="Liberation Sans" font-weight="normal" >14.6</text>
<text x="941.8" y="321.8" font-size="10" fill="#fff" text-anchor="middle" font-family="Liberation Sans" font-weight="normal" >21.9</text>
<text x="1048" y="321.8" font-size="10" fill="#fff" text-anchor="end" font-family="Liberation Sans" font-weight="normal" >29</text>
<text x="836.0" y="330.6" font-size="10" fill="#fff" text-anchor="middle" font-family="Liberation Sans" font-weight="normal" textLength="68" lengthAdjust="spacingAndGlyphs" >Distance in km</text>
<g transform="translate(603,170.0) rotate(-90)">
<text x="-47.5" y="0" font-size="12.5" fill="#fff" text-anchor="start" font-family="Liberation Serif" font-weight="bold" textLength="60" lengthAdjust="spacingAndGlyphs" stroke="none">km above</text>
<text x="21.8" y="0" font-size="11.5" fill="#fff" text-anchor="start" font-family="Liberation Mono" font-weight="normal" textLength="25.7" lengthAdjust="spacingAndGlyphs" stroke="none">MSL</text>
</g>
<rect x="577.5" y="336.5" width="45" height="47" fill="#191970" stroke="#8a8a8a" stroke-width="1"/>
<path d="M583.90,348.30 C584.33,347.90 585.10,346.62 586.50,345.90 C587.90,345.18 590.85,344.35 592.30,344.00 C593.75,343.65 593.95,343.58 595.20,343.80 C596.45,344.02 598.35,344.77 599.80,345.30 C601.25,345.83 602.65,346.53 603.90,347.00 C605.15,347.47 606.05,348.02 607.30,348.10 C608.55,348.18 610.13,347.95 611.40,347.50 C612.67,347.05 614.32,345.75 614.90,345.40" fill="none" stroke="#ffff00" stroke-width="2.0" stroke-linecap="round"/>
<path d="M614.90,345.60 C614.42,346.37 613.65,348.77 612.00,350.20 C610.35,351.63 607.12,353.02 605.00,354.20 C602.88,355.38 601.22,355.92 599.30,357.30 C597.38,358.68 595.05,360.88 593.50,362.50 C591.95,364.12 591.65,364.87 590.00,367.00 C588.35,369.13 584.67,373.92 583.60,375.30" fill="none" stroke="#ffff00" stroke-width="1.7" stroke-linecap="round"/>
<path d="M583.60,375.30 C584.00,375.00 585.03,373.95 586.00,373.50 C586.97,373.05 587.58,372.72 589.40,372.60 C591.22,372.48 594.97,372.47 596.90,372.80 C598.83,373.13 599.65,374.00 601.00,374.60 C602.35,375.20 603.55,376.05 605.00,376.40 C606.45,376.75 608.35,376.97 609.70,376.70 C611.05,376.43 612.10,375.67 613.10,374.80 C614.10,373.93 615.27,372.05 615.70,371.50" fill="none" stroke="#ffff00" stroke-width="2.0" stroke-linecap="round"/>
<rect x="624.5" y="336.5" width="45" height="47" fill="#191970" stroke="#8a8a8a" stroke-width="1"/>
<text x="647" y="346" font-size="7" fill="#ffff00" text-anchor="middle" font-family="Liberation Sans" font-weight="bold" textLength="25" lengthAdjust="spacingAndGlyphs" >CROSS</text>
<text x="647" y="381" font-size="7" fill="#ffff00" text-anchor="middle" font-family="Liberation Sans" font-weight="bold" textLength="31" lengthAdjust="spacingAndGlyphs" >SECTION</text>
<pattern id="stffff00624" width="2" height="2" patternUnits="userSpaceOnUse"><rect width="2" height="2" fill="#191970"/><rect width="1" height="1" fill="#ffff00"/><rect x="1" y="1" width="1" height="1" fill="#ffff00"/></pattern>
<rect x="637.5" y="347.5" width="28" height="20" stroke="#ffff00" stroke-width="1" fill="none" shape-rendering="crispEdges"/>
<rect x="628.5" y="353.5" width="21" height="20" stroke="#ffff00" stroke-width="1" fill="none" shape-rendering="crispEdges"/>
<path d="M628.5,353.5 L637.5,347.5 M649.5,353.5 L665.5,347.5 M649.5,373.5 L665.5,367.5 M628.5,373.5 L637.5,367.5" stroke="#ffff00" fill="none"/>
<polygon points="638,351 659,349 659,369 638,371" fill="url(#stffff00624)" stroke="#ffff00" stroke-width="1"/>
<line x1="649.5" y1="350" x2="649.5" y2="370" stroke="#ffff00"/>
<rect x="671.5" y="336.5" width="45" height="47" fill="#686868" stroke="#8a8a8a" stroke-width="1"/>
<text x="694" y="346" font-size="7" fill="#e8e8e8" text-anchor="middle" font-family="Liberation Sans" font-weight="bold" textLength="25" lengthAdjust="spacingAndGlyphs" >CROSS</text>
<text x="694" y="381" font-size="7" fill="#e8e8e8" text-anchor="middle" font-family="Liberation Sans" font-weight="bold" textLength="31" lengthAdjust="spacingAndGlyphs" >SECTION</text>
<pattern id="ste8e8e8671" width="2" height="2" patternUnits="userSpaceOnUse"><rect width="2" height="2" fill="#686868"/><rect width="1" height="1" fill="#e8e8e8"/><rect x="1" y="1" width="1" height="1" fill="#e8e8e8"/></pattern>
<rect x="684.5" y="347.5" width="28" height="20" stroke="#e8e8e8" stroke-width="1" fill="none" shape-rendering="crispEdges"/>
<rect x="675.5" y="353.5" width="21" height="20" stroke="#e8e8e8" stroke-width="1" fill="none" shape-rendering="crispEdges"/>
<path d="M675.5,353.5 L684.5,347.5 M696.5,353.5 L712.5,347.5 M696.5,373.5 L712.5,367.5 M675.5,373.5 L684.5,367.5" stroke="#e8e8e8" fill="none"/>
<polygon points="685,351 706,349 706,369 685,371" fill="url(#ste8e8e8671)" stroke="#e8e8e8" stroke-width="1"/>
<line x1="696.5" y1="350" x2="696.5" y2="370" stroke="#e8e8e8"/>
<rect x="718.5" y="336.5" width="45" height="47" fill="#686868" stroke="#8a8a8a" stroke-width="1"/>
<text x="741" y="346" font-size="7" fill="#e8e8e8" text-anchor="middle" font-family="Liberation Sans" font-weight="bold" textLength="25" lengthAdjust="spacingAndGlyphs" >CROSS</text>
<text x="741" y="381" font-size="7" fill="#e8e8e8" text-anchor="middle" font-family="Liberation Sans" font-weight="bold" textLength="31" lengthAdjust="spacingAndGlyphs" >SECTION</text>
<pattern id="ste8e8e8718" width="2" height="2" patternUnits="userSpaceOnUse"><rect width="2" height="2" fill="#686868"/><rect width="1" height="1" fill="#e8e8e8"/><rect x="1" y="1" width="1" height="1" fill="#e8e8e8"/></pattern>
<rect x="731.5" y="347.5" width="28" height="20" stroke="#e8e8e8" stroke-width="1" fill="none" shape-rendering="crispEdges"/>
<rect x="722.5" y="353.5" width="21" height="20" stroke="#e8e8e8" stroke-width="1" fill="none" shape-rendering="crispEdges"/>
<path d="M722.5,353.5 L731.5,347.5 M743.5,353.5 L759.5,347.5 M743.5,373.5 L759.5,367.5 M722.5,373.5 L731.5,367.5" stroke="#e8e8e8" fill="none"/>
<polygon points="732,351 753,349 753,369 732,371" fill="url(#ste8e8e8718)" stroke="#e8e8e8" stroke-width="1"/>
<line x1="743.5" y1="350" x2="743.5" y2="370" stroke="#e8e8e8"/>
<defs><clipPath id="xs2"><polygon points="637,620.25 664,620.25 667.2,616.7 667.2,609 724.5,609 727,606.5 727,591 782.8,591 782.8,609 838.7,609 838.7,632 900,632 904.3,627.75 904.3,609 967.8,609 967.8,619.8 1050.75,619.8 1050.75,671.5 994.5,671.5 990,678 990,682.75 756.8,682.75 756.8,671.5 676,671.5 676,654.8 637,654.8"/></clipPath></defs>
<g clip-path="url(#xs2)" shape-rendering="crispEdges">
<rect x="630" y="585" width="430" height="105" fill="#06a812" />
<polygon points="635.0,655.4 641.2,647.1 651.7,637.7 669.0,630.4 682.9,628.3 726.7,629.0 776.7,628.3 810.0,625.8 826.7,622.1 838.8,619.6 841.2,619.6 882.5,632.1 898.1,632.1 903.3,638.8 920.0,632.5 938.8,625.2 965.8,620.4 1051.2,619.6 1060.0,700.0 630.0,700.0" fill="#078018" />
<polygon points="635.0,655.0 676.7,653.3 693.3,653.8 718.3,655.8 745.4,652.3 776.7,648.8 812.1,645.0 826.7,639.8 838.8,632.1 850.0,632.1 820.0,632.1 882.5,632.1 888.8,645.0 899.2,653.3 913.8,656.5 932.5,657.5 949.2,652.3 974.2,642.9 1003.3,631.5 1028.3,624.6 1040.8,620.0 1051.2,619.2 1060.0,700.0 630.0,700.0" fill="#045014" />
<polygon points="756.9,672.1 756.9,671.0 768.3,667.9 782.9,665.2 810.0,662.7 818.3,660.6 830.8,657.1 838.8,652.9 850.0,648.1 838.8,653.3 853.3,646.0 870.0,641.2 874.6,644.0 880.4,654.4 892.9,665.8 907.5,671.7 924.2,677.3 936.7,677.3 953.3,672.5 965.8,670.4 1024.2,667.5 1036.7,660.6 1045.0,651.2 1051.2,645.4 1060.0,700.0 756.9,700.0" fill="#b4b4b4" />
</g>
<text x="584" y="405" font-size="18.5" fill="#ffff00" text-anchor="start" font-family="Liberation Sans" font-weight="normal" textLength="176" lengthAdjust="spacingAndGlyphs" stroke="#ffff00" stroke-width="0.45">2-aug-1997,09:05:00</text>
<text x="772" y="405" font-size="18.5" fill="#fff" text-anchor="start" font-family="Liberation Sans" font-weight="normal" textLength="312" lengthAdjust="spacingAndGlyphs" stroke="#fff" stroke-width="0.45">Planar cross-section plot.  Contour of</text>
<text x="584" y="432" font-size="18.5" fill="#fff" text-anchor="start" font-family="Liberation Sans" font-weight="normal" textLength="229" lengthAdjust="spacingAndGlyphs" stroke="#fff" stroke-width="0.45">radialvelocity using: rhb_3d.</text>
<line x1="1051" y1="412.5" x2="1134" y2="412.5" stroke="#aaa" stroke-width="1" />
<line x1="1051" y1="719.5" x2="1134" y2="719.5" stroke="#aaa" stroke-width="1" />
<text x="1053" y="428" font-size="12" fill="#fff" text-anchor="start" font-family="Liberation Sans" font-weight="normal" textLength="74" lengthAdjust="spacingAndGlyphs" >radialvelocity</text>
<rect x="1052" y="436" width="10" height="11" fill="#ff0000" shape-rendering="crispEdges"/>
<rect x="1052" y="447" width="10" height="11" fill="#dc0000" shape-rendering="crispEdges"/>
<rect x="1052" y="458" width="10" height="11" fill="#8c0000" shape-rendering="crispEdges"/>
<rect x="1052" y="469" width="10" height="11" fill="#d85010" shape-rendering="crispEdges"/>
<rect x="1052" y="480" width="10" height="11" fill="#ff8010" shape-rendering="crispEdges"/>
<rect x="1052" y="491" width="10" height="11" fill="#ff5858" shape-rendering="crispEdges"/>
<rect x="1052" y="502" width="10" height="11" fill="#ff8c8c" shape-rendering="crispEdges"/>
<rect x="1052" y="513" width="10" height="11" fill="#ffc0c0" shape-rendering="crispEdges"/>
<rect x="1052" y="524" width="10" height="11" fill="#ffff00" shape-rendering="crispEdges"/>
<rect x="1052" y="535" width="10" height="11" fill="#ffb428" shape-rendering="crispEdges"/>
<rect x="1052" y="546" width="10" height="11" fill="#d89858" shape-rendering="crispEdges"/>
<rect x="1052" y="557" width="10" height="11" fill="#a84808" shape-rendering="crispEdges"/>
<rect x="1052" y="568" width="10" height="11" fill="#b4b4b4" shape-rendering="crispEdges"/>
<rect x="1052" y="579" width="10" height="11" fill="#045014" shape-rendering="crispEdges"/>
<rect x="1052" y="590" width="10" height="11" fill="#078018" shape-rendering="crispEdges"/>
<rect x="1052" y="601" width="10" height="11" fill="#06a812" shape-rendering="crispEdges"/>
<rect x="1052" y="612" width="10" height="11" fill="#00ff00" shape-rendering="crispEdges"/>
<rect x="1052" y="623" width="10" height="11" fill="#00b4ff" shape-rendering="crispEdges"/>
<rect x="1052" y="634" width="10" height="11" fill="#0078f0" shape-rendering="crispEdges"/>
<rect x="1052" y="645" width="10" height="11" fill="#0000dc" shape-rendering="crispEdges"/>
<rect x="1052" y="656" width="10" height="11" fill="#0014a8" shape-rendering="crispEdges"/>
<rect x="1052" y="667" width="10" height="11" fill="#000078" shape-rendering="crispEdges"/>
<rect x="1052" y="678" width="10" height="11" fill="#8c8cc8" shape-rendering="crispEdges"/>
<rect x="1052" y="689" width="10" height="11" fill="#505080" shape-rendering="crispEdges"/>
<rect x="1052" y="700" width="10" height="11" fill="#787878" shape-rendering="crispEdges"/>
<text x="1067" y="446" font-size="12" fill="#fff" text-anchor="start" font-family="Liberation Sans" font-weight="normal" >24.0</text>
<text x="1067" y="457" font-size="12" fill="#fff" text-anchor="start" font-family="Liberation Sans" font-weight="normal" >22.0</text>
<text x="1067" y="468" font-size="12" fill="#fff" text-anchor="start" font-family="Liberation Sans" font-weight="normal" >20.0</text>
<text x="1067" y="479" font-size="12" fill="#fff" text-anchor="start" font-family="Liberation Sans" font-weight="normal" >18.0</text>
<text x="1067" y="490" font-size="12" fill="#fff" text-anchor="start" font-family="Liberation Sans" font-weight="normal" >16.0</text>
<text x="1067" y="501" font-size="12" fill="#fff" text-anchor="start" font-family="Liberation Sans" font-weight="normal" >14.0</text>
<text x="1067" y="512" font-size="12" fill="#fff" text-anchor="start" font-family="Liberation Sans" font-weight="normal" >12.0</text>
<text x="1067" y="523" font-size="12" fill="#fff" text-anchor="start" font-family="Liberation Sans" font-weight="normal" >10.0</text>
<text x="1067" y="534" font-size="12" fill="#fff" text-anchor="start" font-family="Liberation Sans" font-weight="normal" >8.0</text>
<text x="1067" y="545" font-size="12" fill="#fff" text-anchor="start" font-family="Liberation Sans" font-weight="normal" >6.0</text>
<text x="1067" y="556" font-size="12" fill="#fff" text-anchor="start" font-family="Liberation Sans" font-weight="normal" >4.0</text>
<text x="1067" y="567" font-size="12" fill="#fff" text-anchor="start" font-family="Liberation Sans" font-weight="normal" >2.0</text>
<text x="1067" y="578" font-size="12" fill="#fff" text-anchor="start" font-family="Liberation Sans" font-weight="normal" >0.0</text>
<text x="1067" y="589" font-size="12" fill="#fff" text-anchor="start" font-family="Liberation Sans" font-weight="normal" >−2.0</text>
<text x="1067" y="600" font-size="12" fill="#fff" text-anchor="start" font-family="Liberation Sans" font-weight="normal" >−4.0</text>
<text x="1067" y="611" font-size="12" fill="#fff" text-anchor="start" font-family="Liberation Sans" font-weight="normal" >−6.0</text>
<text x="1067" y="622" font-size="12" fill="#fff" text-anchor="start" font-family="Liberation Sans" font-weight="normal" >−8.0</text>
<text x="1067" y="633" font-size="12" fill="#fff" text-anchor="start" font-family="Liberation Sans" font-weight="normal" >−10.0</text>
<text x="1067" y="644" font-size="12" fill="#fff" text-anchor="start" font-family="Liberation Sans" font-weight="normal" >−12.0</text>
<text x="1067" y="655" font-size="12" fill="#fff" text-anchor="start" font-family="Liberation Sans" font-weight="normal" >−14.0</text>
<text x="1067" y="666" font-size="12" fill="#fff" text-anchor="start" font-family="Liberation Sans" font-weight="normal" >−16.0</text>
<text x="1067" y="677" font-size="12" fill="#fff" text-anchor="start" font-family="Liberation Sans" font-weight="normal" >−18.0</text>
<text x="1067" y="688" font-size="12" fill="#fff" text-anchor="start" font-family="Liberation Sans" font-weight="normal" >−20.0</text>
<text x="1067" y="699" font-size="12" fill="#fff" text-anchor="start" font-family="Liberation Sans" font-weight="normal" >−22.0</text>
<text x="1067" y="710" font-size="12" fill="#fff" text-anchor="start" font-family="Liberation Sans" font-weight="normal" >−24.0</text>
<line x1="624.5" y1="413" x2="624.5" y2="696" stroke="#fff" stroke-width="1" shape-rendering="crispEdges"/>
<line x1="1050.5" y1="413" x2="1050.5" y2="696" stroke="#fff" stroke-width="1" shape-rendering="crispEdges"/>
<line x1="624" y1="413.5" x2="1050" y2="413.5" stroke="#fff" stroke-width="1" shape-rendering="crispEdges"/>
<line x1="624" y1="695.5" x2="1051" y2="695.5" stroke="#fff" stroke-width="1" shape-rendering="crispEdges"/>
<line x1="677.5" y1="413" x2="677.5" y2="421" stroke="#fff" stroke-width="1" shape-rendering="crispEdges"/>
<line x1="677.5" y1="687" x2="677.5" y2="695" stroke="#fff" stroke-width="1" shape-rendering="crispEdges"/>
<line x1="731.5" y1="413" x2="731.5" y2="421" stroke="#fff" stroke-width="1" shape-rendering="crispEdges"/>
<line x1="731.5" y1="687" x2="731.5" y2="695" stroke="#fff" stroke-width="1" shape-rendering="crispEdges"/>
<line x1="784.5" y1="413" x2="784.5" y2="421" stroke="#fff" stroke-width="1" shape-rendering="crispEdges"/>
<line x1="784.5" y1="687" x2="784.5" y2="695" stroke="#fff" stroke-width="1" shape-rendering="crispEdges"/>
<line x1="837.5" y1="413" x2="837.5" y2="421" stroke="#fff" stroke-width="1" shape-rendering="crispEdges"/>
<line x1="837.5" y1="687" x2="837.5" y2="695" stroke="#fff" stroke-width="1" shape-rendering="crispEdges"/>
<line x1="890.5" y1="413" x2="890.5" y2="421" stroke="#fff" stroke-width="1" shape-rendering="crispEdges"/>
<line x1="890.5" y1="687" x2="890.5" y2="695" stroke="#fff" stroke-width="1" shape-rendering="crispEdges"/>
<line x1="944.5" y1="413" x2="944.5" y2="421" stroke="#fff" stroke-width="1" shape-rendering="crispEdges"/>
<line x1="944.5" y1="687" x2="944.5" y2="695" stroke="#fff" stroke-width="1" shape-rendering="crispEdges"/>
<line x1="997.5" y1="413" x2="997.5" y2="421" stroke="#fff" stroke-width="1" shape-rendering="crispEdges"/>
<line x1="997.5" y1="687" x2="997.5" y2="695" stroke="#fff" stroke-width="1" shape-rendering="crispEdges"/>
<line x1="624" y1="667.5" x2="636" y2="667.5" stroke="#fff" stroke-width="1" shape-rendering="crispEdges"/>
<line x1="1039" y1="667.5" x2="1050" y2="667.5" stroke="#fff" stroke-width="1" shape-rendering="crispEdges"/>
<line x1="624" y1="639.5" x2="636" y2="639.5" stroke="#fff" stroke-width="1" shape-rendering="crispEdges"/>
<line x1="1039" y1="639.5" x2="1050" y2="639.5" stroke="#fff" stroke-width="1" shape-rendering="crispEdges"/>
<line x1="624" y1="610.5" x2="636" y2="610.5" stroke="#fff" stroke-width="1" shape-rendering="crispEdges"/>
<line x1="1039" y1="610.5" x2="1050" y2="610.5" stroke="#fff" stroke-width="1" shape-rendering="crispEdges"/>
<line x1="624" y1="582.5" x2="636" y2="582.5" stroke="#fff" stroke-width="1" shape-rendering="crispEdges"/>
<line x1="1039" y1="582.5" x2="1050" y2="582.5" stroke="#fff" stroke-width="1" shape-rendering="crispEdges"/>
<line x1="624" y1="554.5" x2="636" y2="554.5" stroke="#fff" stroke-width="1" shape-rendering="crispEdges"/>
<line x1="1039" y1="554.5" x2="1050" y2="554.5" stroke="#fff" stroke-width="1" shape-rendering="crispEdges"/>
<line x1="624" y1="526.5" x2="636" y2="526.5" stroke="#fff" stroke-width="1" shape-rendering="crispEdges"/>
<line x1="1039" y1="526.5" x2="1050" y2="526.5" stroke="#fff" stroke-width="1" shape-rendering="crispEdges"/>
<line x1="624" y1="498.5" x2="636" y2="498.5" stroke="#fff" stroke-width="1" shape-rendering="crispEdges"/>
<line x1="1039" y1="498.5" x2="1050" y2="498.5" stroke="#fff" stroke-width="1" shape-rendering="crispEdges"/>
<line x1="624" y1="469.5" x2="636" y2="469.5" stroke="#fff" stroke-width="1" shape-rendering="crispEdges"/>
<line x1="1039" y1="469.5" x2="1050" y2="469.5" stroke="#fff" stroke-width="1" shape-rendering="crispEdges"/>
<line x1="624" y1="441.5" x2="636" y2="441.5" stroke="#fff" stroke-width="1" shape-rendering="crispEdges"/>
<line x1="1039" y1="441.5" x2="1050" y2="441.5" stroke="#fff" stroke-width="1" shape-rendering="crispEdges"/>
<text x="621" y="695.3" font-size="10" fill="#fff" text-anchor="end" font-family="Liberation Sans" font-weight="normal" >0</text>
<text x="621" y="639.3" font-size="10" fill="#fff" text-anchor="end" font-family="Liberation Sans" font-weight="normal" >4</text>
<text x="621" y="582.3" font-size="10" fill="#fff" text-anchor="end" font-family="Liberation Sans" font-weight="normal" >8</text>
<text x="621" y="526.3" font-size="10" fill="#fff" text-anchor="end" font-family="Liberation Sans" font-weight="normal" >12</text>
<text x="621" y="469.3" font-size="10" fill="#fff" text-anchor="end" font-family="Liberation Sans" font-weight="normal" >16</text>
<text x="621" y="413.3" font-size="10" fill="#fff" text-anchor="end" font-family="Liberation Sans" font-weight="normal" >20</text>
<text x="624.0" y="705.8" font-size="10" fill="#fff" text-anchor="middle" font-family="Liberation Sans" font-weight="normal" >0.0</text>
<text x="730.6" y="705.8" font-size="10" fill="#fff" text-anchor="middle" font-family="Liberation Sans" font-weight="normal" >7.3</text>
<text x="837.2" y="705.8" font-size="10" fill="#fff" text-anchor="middle" font-family="Liberation Sans" font-weight="normal" >14.6</text>
<text x="943.8" y="705.8" font-size="10" fill="#fff" text-anchor="middle" font-family="Liberation Sans" font-weight="normal" >21.9</text>
<text x="1050" y="705.8" font-size="10" fill="#fff" text-anchor="end" font-family="Liberation Sans" font-weight="normal" >29</text>
<text x="838.0" y="714.6" font-size="10" fill="#fff" text-anchor="middle" font-family="Liberation Sans" font-weight="normal" textLength="68" lengthAdjust="spacingAndGlyphs" >Distance in km</text>
<g transform="translate(605,554.0) rotate(-90)">
<text x="-47.5" y="0" font-size="12.5" fill="#fff" text-anchor="start" font-family="Liberation Serif" font-weight="bold" textLength="60" lengthAdjust="spacingAndGlyphs" stroke="none">km above</text>
<text x="21.8" y="0" font-size="11.5" fill="#fff" text-anchor="start" font-family="Liberation Mono" font-weight="normal" textLength="25.7" lengthAdjust="spacingAndGlyphs" stroke="none">MSL</text>
</g>
<rect x="579.5" y="720.5" width="45" height="47" fill="#191970" stroke="#8a8a8a" stroke-width="1"/>
<path d="M585.90,732.30 C586.33,731.90 587.10,730.62 588.50,729.90 C589.90,729.18 592.85,728.35 594.30,728.00 C595.75,727.65 595.95,727.58 597.20,727.80 C598.45,728.02 600.35,728.77 601.80,729.30 C603.25,729.83 604.65,730.53 605.90,731.00 C607.15,731.47 608.05,732.02 609.30,732.10 C610.55,732.18 612.13,731.95 613.40,731.50 C614.67,731.05 616.32,729.75 616.90,729.40" fill="none" stroke="#ffff00" stroke-width="2.0" stroke-linecap="round"/>
<path d="M616.90,729.60 C616.42,730.37 615.65,732.77 614.00,734.20 C612.35,735.63 609.12,737.02 607.00,738.20 C604.88,739.38 603.22,739.92 601.30,741.30 C599.38,742.68 597.05,744.88 595.50,746.50 C593.95,748.12 593.65,748.87 592.00,751.00 C590.35,753.13 586.67,757.92 585.60,759.30" fill="none" stroke="#ffff00" stroke-width="1.7" stroke-linecap="round"/>
<path d="M585.60,759.30 C586.00,759.00 587.03,757.95 588.00,757.50 C588.97,757.05 589.58,756.72 591.40,756.60 C593.22,756.48 596.97,756.47 598.90,756.80 C600.83,757.13 601.65,758.00 603.00,758.60 C604.35,759.20 605.55,760.05 607.00,760.40 C608.45,760.75 610.35,760.97 611.70,760.70 C613.05,760.43 614.10,759.67 615.10,758.80 C616.10,757.93 617.27,756.05 617.70,755.50" fill="none" stroke="#ffff00" stroke-width="2.0" stroke-linecap="round"/>
<rect x="626.5" y="720.5" width="45" height="47" fill="#191970" stroke="#8a8a8a" stroke-width="1"/>
<text x="649" y="730" font-size="7" fill="#ffff00" text-anchor="middle" font-family="Liberation Sans" font-weight="bold" textLength="25" lengthAdjust="spacingAndGlyphs" >CROSS</text>
<text x="649" y="765" font-size="7" fill="#ffff00" text-anchor="middle" font-family="Liberation Sans" font-weight="bold" textLength="31" lengthAdjust="spacingAndGlyphs" >SECTION</text>
<pattern id="stffff00626" width="2" height="2" patternUnits="userSpaceOnUse"><rect width="2" height="2" fill="#191970"/><rect width="1" height="1" fill="#ffff00"/><rect x="1" y="1" width="1" height="1" fill="#ffff00"/></pattern>
<rect x="639.5" y="731.5" width="28" height="20" stroke="#ffff00" stroke-width="1" fill="none" shape-rendering="crispEdges"/>
<rect x="630.5" y="737.5" width="21" height="20" stroke="#ffff00" stroke-width="1" fill="none" shape-rendering="crispEdges"/>
<path d="M630.5,737.5 L639.5,731.5 M651.5,737.5 L667.5,731.5 M651.5,757.5 L667.5,751.5 M630.5,757.5 L639.5,751.5" stroke="#ffff00" fill="none"/>
<polygon points="640,735 661,733 661,753 640,755" fill="url(#stffff00626)" stroke="#ffff00" stroke-width="1"/>
<line x1="651.5" y1="734" x2="651.5" y2="754" stroke="#ffff00"/>
<rect x="673.5" y="720.5" width="45" height="47" fill="#686868" stroke="#8a8a8a" stroke-width="1"/>
<text x="696" y="730" font-size="7" fill="#e8e8e8" text-anchor="middle" font-family="Liberation Sans" font-weight="bold" textLength="25" lengthAdjust="spacingAndGlyphs" >CROSS</text>
<text x="696" y="765" font-size="7" fill="#e8e8e8" text-anchor="middle" font-family="Liberation Sans" font-weight="bold" textLength="31" lengthAdjust="spacingAndGlyphs" >SECTION</text>
<pattern id="ste8e8e8673" width="2" height="2" patternUnits="userSpaceOnUse"><rect width="2" height="2" fill="#686868"/><rect width="1" height="1" fill="#e8e8e8"/><rect x="1" y="1" width="1" height="1" fill="#e8e8e8"/></pattern>
<rect x="686.5" y="731.5" width="28" height="20" stroke="#e8e8e8" stroke-width="1" fill="none" shape-rendering="crispEdges"/>
<rect x="677.5" y="737.5" width="21" height="20" stroke="#e8e8e8" stroke-width="1" fill="none" shape-rendering="crispEdges"/>
<path d="M677.5,737.5 L686.5,731.5 M698.5,737.5 L714.5,731.5 M698.5,757.5 L714.5,751.5 M677.5,757.5 L686.5,751.5" stroke="#e8e8e8" fill="none"/>
<polygon points="687,735 708,733 708,753 687,755" fill="url(#ste8e8e8673)" stroke="#e8e8e8" stroke-width="1"/>
<line x1="698.5" y1="734" x2="698.5" y2="754" stroke="#e8e8e8"/>
<rect x="720.5" y="720.5" width="45" height="47" fill="#686868" stroke="#8a8a8a" stroke-width="1"/>
<text x="743" y="730" font-size="7" fill="#e8e8e8" text-anchor="middle" font-family="Liberation Sans" font-weight="bold" textLength="25" lengthAdjust="spacingAndGlyphs" >CROSS</text>
<text x="743" y="765" font-size="7" fill="#e8e8e8" text-anchor="middle" font-family="Liberation Sans" font-weight="bold" textLength="31" lengthAdjust="spacingAndGlyphs" >SECTION</text>
<pattern id="ste8e8e8720" width="2" height="2" patternUnits="userSpaceOnUse"><rect width="2" height="2" fill="#686868"/><rect width="1" height="1" fill="#e8e8e8"/><rect x="1" y="1" width="1" height="1" fill="#e8e8e8"/></pattern>
<rect x="733.5" y="731.5" width="28" height="20" stroke="#e8e8e8" stroke-width="1" fill="none" shape-rendering="crispEdges"/>
<rect x="724.5" y="737.5" width="21" height="20" stroke="#e8e8e8" stroke-width="1" fill="none" shape-rendering="crispEdges"/>
<path d="M724.5,737.5 L733.5,731.5 M745.5,737.5 L761.5,731.5 M745.5,757.5 L761.5,751.5 M724.5,757.5 L733.5,751.5" stroke="#e8e8e8" fill="none"/>
<polygon points="734,735 755,733 755,753 734,755" fill="url(#ste8e8e8720)" stroke="#e8e8e8" stroke-width="1"/>
<line x1="745.5" y1="734" x2="745.5" y2="754" stroke="#e8e8e8"/>
<rect x="430" y="771" width="651" height="113" fill="#000" />
<rect x="436" y="797" width="638" height="81" fill="none" stroke="#fff" stroke-width="2" shape-rendering="crispEdges"/>
<rect x="577" y="772" width="44" height="22" fill="none" stroke="#fff" stroke-width="2" shape-rendering="crispEdges"/>
<text x="581.8" y="788" font-size="12.4" fill="#fff" text-anchor="start" font-family="Liberation Sans" font-weight="normal" textLength="33.5" lengthAdjust="spacingAndGlyphs" stroke="none">Dismiss</text>
<text x="575" y="813" font-size="15" fill="#fff" text-anchor="start" font-family="Liberation Mono" font-weight="normal" textLength="71.0" lengthAdjust="spacingAndGlyphs" stroke="#fff" stroke-width="0.3">PLATFORM</text>
<text x="674" y="813" font-size="15" fill="#fff" text-anchor="start" font-family="Liberation Mono" font-weight="normal" textLength="44.0" lengthAdjust="spacingAndGlyphs" stroke="#fff" stroke-width="0.3">FIELD</text>
<text x="773" y="813" font-size="15" fill="#fff" text-anchor="start" font-family="Liberation Mono" font-weight="normal" textLength="71.0" lengthAdjust="spacingAndGlyphs" stroke="#fff" stroke-width="0.3">ALTITUDE</text>
<text x="908" y="813" font-size="15" fill="#fff" text-anchor="start" font-family="Liberation Mono" font-weight="normal" textLength="35.0" lengthAdjust="spacingAndGlyphs" stroke="#fff" stroke-width="0.3">TIME</text>
<text x="575" y="827.8" font-size="15" fill="#fff" text-anchor="start" font-family="Liberation Mono" font-weight="normal" textLength="89.0" lengthAdjust="spacingAndGlyphs" stroke="#fff" stroke-width="0.3">rhb_lowprf</text>
<text x="674" y="827.8" font-size="15" fill="#fff" text-anchor="start" font-family="Liberation Mono" font-weight="normal" textLength="44.0" lengthAdjust="spacingAndGlyphs" stroke="#fff" stroke-width="0.3">maxdz</text>
<text x="773" y="827.8" font-size="15" fill="#fff" text-anchor="start" font-family="Liberation Mono" font-weight="normal" textLength="98.0" lengthAdjust="spacingAndGlyphs" stroke="#fff" stroke-width="0.3">0.50 km MSL</text>
<text x="908" y="827.8" font-size="15" fill="#fff" text-anchor="start" font-family="Liberation Mono" font-weight="normal" textLength="143.0" lengthAdjust="spacingAndGlyphs" stroke="#fff" stroke-width="0.3">2-Aug-97,9:00:11</text>
<text x="575" y="842.6" font-size="15" fill="#fff" text-anchor="start" font-family="Liberation Mono" font-weight="normal" textLength="53.0" lengthAdjust="spacingAndGlyphs" stroke="#fff" stroke-width="0.3">rhb_3d</text>
<text x="674" y="842.6" font-size="15" fill="#fff" text-anchor="start" font-family="Liberation Mono" font-weight="normal" textLength="44.0" lengthAdjust="spacingAndGlyphs" stroke="#fff" stroke-width="0.3">maxdz</text>
<text x="773" y="842.6" font-size="15" fill="#fff" text-anchor="start" font-family="Liberation Mono" font-weight="normal" textLength="98.0" lengthAdjust="spacingAndGlyphs" stroke="#fff" stroke-width="0.3">0.50 km MSL</text>
<text x="908" y="842.6" font-size="15" fill="#fff" text-anchor="start" font-family="Liberation Mono" font-weight="normal" textLength="143.0" lengthAdjust="spacingAndGlyphs" stroke="#fff" stroke-width="0.3">2-Aug-97,9:01:12</text>
<text x="575" y="857.4" font-size="15" fill="#fff" text-anchor="start" font-family="Liberation Mono" font-weight="normal" textLength="62.0" lengthAdjust="spacingAndGlyphs" stroke="#fff" stroke-width="0.3">rhb_met</text>
<text x="773" y="857.4" font-size="15" fill="#fff" text-anchor="start" font-family="Liberation Mono" font-weight="normal" textLength="143.0" lengthAdjust="spacingAndGlyphs" stroke="#fff" stroke-width="0.3">2-Aug-97,9:04:52</text>
<line x1="430" y1="884.5" x2="1081" y2="884.5" stroke="#fff" stroke-width="1" stroke-dasharray="1,1" shape-rendering="crispEdges"/>
<line x1="1080.5" y1="775" x2="1080.5" y2="884" stroke="#fff" stroke-width="1" stroke-dasharray="1,1" shape-rendering="crispEdges"/>
<line x1="430.5" y1="870" x2="430.5" y2="884" stroke="#fff" stroke-width="1" stroke-dasharray="1,1" shape-rendering="crispEdges"/>
<rect x="5" y="428" width="568" height="443" fill="#000" />
<defs><clipPath id="radclip"><rect x="55" y="457.5" width="432" height="337"/></clipPath></defs>
<g clip-path="url(#radclip)">
<rect x="252.2" y="465" width="13.8" height="11" fill="#0b7a4e" shape-rendering="crispEdges"/>
<rect x="262.4" y="469.6" width="3.6" height="3.2" fill="#00e696" shape-rendering="crispEdges"/>
<rect x="244.2" y="495.9" width="4.3" height="1.9" fill="#00e696" shape-rendering="crispEdges"/>
<rect x="247" y="504.4" width="4.5" height="7.3" fill="#00e696" shape-rendering="crispEdges"/>
<rect x="251.5" y="510" width="3.5" height="2" fill="#00e696" shape-rendering="crispEdges"/>
<rect x="235" y="506.8" width="8" height="7.2" fill="#00e696" shape-rendering="crispEdges"/>
<rect x="233" y="511" width="8" height="7" fill="#00e696" shape-rendering="crispEdges"/>
<rect x="227" y="517.8" width="7.5" height="7.8" fill="#00e696" shape-rendering="crispEdges"/>
<rect x="230" y="515" width="8" height="6" fill="#30f0a8" shape-rendering="crispEdges"/>
<rect x="132.4" y="532.4" width="10.4" height="10.4" fill="#0b7a4e" shape-rendering="crispEdges"/>
<rect x="123.4" y="546.5" width="8.5" height="10.2" fill="#0b7a4e" shape-rendering="crispEdges"/>
<rect x="126" y="543" width="6" height="5" fill="#0b7a4e" shape-rendering="crispEdges"/>
<rect x="131.9" y="548.9" width="2.9" height="2.9" fill="#00e696" shape-rendering="crispEdges"/>
<rect x="266" y="553" width="6.9" height="6" fill="#00a8e0" shape-rendering="crispEdges"/>
<rect x="246.6" y="551.5" width="1.6" height="1.2" fill="#00a8e0" shape-rendering="crispEdges"/>
<rect x="205.3" y="585" width="8.7" height="8" fill="#00a8e0" shape-rendering="crispEdges"/>
<rect x="209" y="579.8" width="8.4" height="9.2" fill="#00e696" shape-rendering="crispEdges"/>
<rect x="210" y="589" width="7" height="6.6" fill="#00a8e0" shape-rendering="crispEdges"/>
<rect x="222.3" y="579" width="6.1" height="6.4" fill="#00e696" shape-rendering="crispEdges"/>
<rect x="174.2" y="608.2" width="8.0" height="10.5" fill="#00e696" shape-rendering="crispEdges"/>
<rect x="177" y="611" width="5.2" height="7.7" fill="#0b7a4e" shape-rendering="crispEdges"/>
<rect x="364.3" y="526.3" width="7.7" height="8.0" fill="#00e696" shape-rendering="crispEdges"/>
<rect x="367.2" y="529.5" width="7.8" height="8.2" fill="#0b7a4e" shape-rendering="crispEdges"/>
<rect x="372.5" y="543.5" width="2.0" height="2.0" fill="#00e696" shape-rendering="crispEdges"/>
<rect x="319" y="579.3" width="5" height="5.7" fill="#0b7a4e" shape-rendering="crispEdges"/>
<rect x="320" y="581" width="3" height="3" fill="#00e696" shape-rendering="crispEdges"/>
<rect x="305.2" y="590.7" width="4.2" height="3.2" fill="#00a8e0" shape-rendering="crispEdges"/>
<rect x="321" y="593" width="5.4" height="6" fill="#00e696" shape-rendering="crispEdges"/>
<rect x="311.8" y="607" width="3.9" height="2.7" fill="#00a8e0" shape-rendering="crispEdges"/>
<rect x="319.8" y="613" width="7.2" height="7" fill="#00e696" shape-rendering="crispEdges"/>
<rect x="322" y="615" width="4" height="4" fill="#ffd700" shape-rendering="crispEdges"/>
<rect x="341" y="610" width="9" height="8.7" fill="#c4c4c4" shape-rendering="crispEdges"/>
<rect x="343" y="612" width="4" height="5" fill="#e8a030" shape-rendering="crispEdges"/>
<rect x="340.5" y="609.5" width="3.5" height="3.5" fill="#00e696" shape-rendering="crispEdges"/>
<rect x="270" y="553.8" width="3" height="4.8" fill="#00a8e0" shape-rendering="crispEdges"/>
<rect x="373.3" y="445" width="1.5" height="2" fill="#00e696" shape-rendering="crispEdges"/>
<rect x="145.7" y="635.8" width="3.2" height="4.9" fill="#00e696" shape-rendering="crispEdges"/>
<rect x="205.3" y="633.4" width="9.7" height="6.6" fill="#00a8e0" shape-rendering="crispEdges"/>
<rect x="207" y="635" width="6" height="4" fill="#00e696" shape-rendering="crispEdges"/>
<rect x="218.7" y="627.3" width="13.3" height="8.5" fill="#00a8e0" shape-rendering="crispEdges"/>
<rect x="214.5" y="626.6" width="20.0" height="1.8" fill="#fff" shape-rendering="crispEdges"/>
<rect x="222" y="629" width="6" height="4" fill="#00e696" shape-rendering="crispEdges"/>
<rect x="226" y="641.9" width="6" height="6.8" fill="#00e696" shape-rendering="crispEdges"/>
<rect x="228" y="643" width="3" height="4" fill="#c4c4c4" shape-rendering="crispEdges"/>
<rect x="246" y="640.7" width="3" height="3.6" fill="#1a6cff" shape-rendering="crispEdges"/>
<rect x="256.3" y="646.7" width="3.7" height="6.1" fill="#1a6cff" shape-rendering="crispEdges"/>
<rect x="249.5" y="659" width="4.5" height="6" fill="#1a6cff" shape-rendering="crispEdges"/>
<rect x="253" y="657.7" width="5.8" height="5.3" fill="#00a8e0" shape-rendering="crispEdges"/>
<rect x="241.7" y="673" width="4.3" height="4" fill="#00a8e0" shape-rendering="crispEdges"/>
<rect x="266" y="661.3" width="3.7" height="5.4" fill="#00e696" shape-rendering="crispEdges"/>
<rect x="260.7" y="671" width="6.6" height="9.3" fill="#00a8e0" shape-rendering="crispEdges"/>
<rect x="263" y="675" width="4" height="5" fill="#00e696" shape-rendering="crispEdges"/>
<rect x="285.5" y="669.3" width="6.1" height="6.1" fill="#0b7a4e" shape-rendering="crispEdges"/>
<rect x="287" y="671" width="3" height="3" fill="#00e696" shape-rendering="crispEdges"/>
<rect x="285.5" y="662" width="2.0" height="2.5" fill="#1a6cff" shape-rendering="crispEdges"/>
<rect x="217.4" y="675.4" width="8.6" height="9.7" fill="#0b7a4e" shape-rendering="crispEdges"/>
<rect x="240" y="684.4" width="11.5" height="9.6" fill="#00a8e0" shape-rendering="crispEdges"/>
<rect x="235.7" y="690" width="10.3" height="9.7" fill="#00e696" shape-rendering="crispEdges"/>
<rect x="247" y="682" width="6.4" height="4.8" fill="#00a8e0" shape-rendering="crispEdges"/>
<rect x="277" y="686.8" width="7.3" height="6.6" fill="#0b7a4e" shape-rendering="crispEdges"/>
<rect x="277" y="692" width="7.3" height="1.8" fill="#00a8e0" shape-rendering="crispEdges"/>
<rect x="295.7" y="685" width="2.0" height="2" fill="#00a8e0" shape-rendering="crispEdges"/>
<rect x="207.2" y="694" width="20.0" height="11.6" fill="#00e696" shape-rendering="crispEdges"/>
<rect x="210.2" y="705.6" width="10.2" height="11.6" fill="#0b7a4e" shape-rendering="crispEdges"/>
<rect x="215.5" y="710" width="4.9" height="7.2" fill="#00e696" shape-rendering="crispEdges"/>
<rect x="196" y="719.7" width="6.4" height="8.5" fill="#00e696" shape-rendering="crispEdges"/>
<rect x="205.3" y="717.2" width="14.1" height="11.0" fill="#0b7a4e" shape-rendering="crispEdges"/>
<rect x="210" y="728" width="10" height="6" fill="#00e696" shape-rendering="crispEdges"/>
<rect x="201.6" y="733.8" width="19.4" height="7.7" fill="#0b7a4e" shape-rendering="crispEdges"/>
<rect x="199.2" y="734.2" width="3.2" height="4.8" fill="#00e696" shape-rendering="crispEdges"/>
<rect x="210" y="741.5" width="9.4" height="3.0" fill="#00e696" shape-rendering="crispEdges"/>
<rect x="255" y="716.7" width="11" height="8.3" fill="#0b7a4e" shape-rendering="crispEdges"/>
<rect x="255" y="720" width="11" height="5" fill="#00e696" shape-rendering="crispEdges"/>
<rect x="257.5" y="717.2" width="5.5" height="4.4" fill="#c4c4c4" shape-rendering="crispEdges"/>
<rect x="286" y="706.3" width="17" height="5.6" fill="#00e696" shape-rendering="crispEdges"/>
<rect x="289" y="711" width="8.7" height="10.6" fill="#0b7a4e" shape-rendering="crispEdges"/>
<rect x="279.4" y="714.3" width="6.6" height="5.7" fill="#c4c4c4" shape-rendering="crispEdges"/>
<rect x="276.3" y="718.4" width="6.7" height="6.6" fill="#00e696" shape-rendering="crispEdges"/>
<rect x="303" y="714.3" width="8" height="5.4" fill="#00e696" shape-rendering="crispEdges"/>
<rect x="297.7" y="711.9" width="2.3" height="8.1" fill="#00e696" shape-rendering="crispEdges"/>
<rect x="244.2" y="745.2" width="3.8" height="7.3" fill="#00e696" shape-rendering="crispEdges"/>
<rect x="248" y="745.2" width="10" height="10.8" fill="#0b7a4e" shape-rendering="crispEdges"/>
<rect x="252" y="745.2" width="3" height="2.4" fill="#c4c4c4" shape-rendering="crispEdges"/>
<rect x="235" y="753.2" width="12" height="10.2" fill="#0b7a4e" shape-rendering="crispEdges"/>
<rect x="240" y="756" width="4" height="5" fill="#00e696" shape-rendering="crispEdges"/>
<rect x="244" y="752" width="3" height="4" fill="#00e696" shape-rendering="crispEdges"/>
<rect x="262.4" y="776" width="45.0" height="14" fill="#0b7a4e" shape-rendering="crispEdges"/>
<rect x="277" y="770.7" width="15" height="7.3" fill="#0b7a4e" shape-rendering="crispEdges"/>
<rect x="279.4" y="773" width="11.0" height="7.4" fill="#c4c4c4" shape-rendering="crispEdges"/>
<rect x="291.6" y="778" width="10.9" height="11" fill="#c4c4c4" shape-rendering="crispEdges"/>
<rect x="266" y="784" width="9.8" height="6" fill="#c4c4c4" shape-rendering="crispEdges"/>
<rect x="389" y="636.5" width="8.6" height="7.3" fill="#0b7a4e" shape-rendering="crispEdges"/>
<rect x="391.5" y="647.2" width="6.1" height="2.5" fill="#00e696" shape-rendering="crispEdges"/>
<rect x="341.7" y="635.8" width="5.6" height="6.1" fill="#e8a030" shape-rendering="crispEdges"/>
<rect x="344" y="639.4" width="6" height="7.3" fill="#c4c4c4" shape-rendering="crispEdges"/>
<rect x="337.6" y="645.5" width="4.8" height="6.1" fill="#c4c4c4" shape-rendering="crispEdges"/>
<rect x="344" y="649" width="2.6" height="6" fill="#00a8e0" shape-rendering="crispEdges"/>
<rect x="340" y="634" width="3" height="5" fill="#00e696" shape-rendering="crispEdges"/>
<rect x="333" y="621" width="6" height="5" fill="#00e696" shape-rendering="crispEdges"/>
<rect x="334.5" y="622.5" width="3.0" height="2.0" fill="#000" shape-rendering="crispEdges"/>
<rect x="345.8" y="622.4" width="8.1" height="6.1" fill="#c4c4c4" shape-rendering="crispEdges"/>
<rect x="347" y="620.5" width="5" height="3.5" fill="#00a8e0" shape-rendering="crispEdges"/>
<rect x="353.9" y="628.5" width="4.8" height="6.1" fill="#00e696" shape-rendering="crispEdges"/>
<rect x="358.7" y="650.4" width="8.0" height="8.0" fill="#0b7a4e" shape-rendering="crispEdges"/>
<rect x="358.7" y="656" width="5.3" height="7.3" fill="#00e696" shape-rendering="crispEdges"/>
<rect x="366.7" y="658.4" width="9.0" height="7.8" fill="#0b7a4e" shape-rendering="crispEdges"/>
<rect x="374.5" y="660.8" width="6.8" height="10.7" fill="#00e696" shape-rendering="crispEdges"/>
<rect x="366.7" y="655.5" width="5.3" height="3.5" fill="#00e696" shape-rendering="crispEdges"/>
<rect x="361" y="678.3" width="8.7" height="11.0" fill="#0b7a4e" shape-rendering="crispEdges"/>
<rect x="345.8" y="685.6" width="15.2" height="7.4" fill="#00e696" shape-rendering="crispEdges"/>
<rect x="369.7" y="685.6" width="8.3" height="8.4" fill="#00e696" shape-rendering="crispEdges"/>
<rect x="345.8" y="689.3" width="6.8" height="7.3" fill="#e8a030" shape-rendering="crispEdges"/>
<rect x="342" y="694.1" width="5.5" height="2.9" fill="#e8a030" shape-rendering="crispEdges"/>
<rect x="330.8" y="694" width="8.5" height="3.3" fill="#00e696" shape-rendering="crispEdges"/>
<rect x="352.6" y="693" width="7.4" height="12" fill="#00e696" shape-rendering="crispEdges"/>
<rect x="361" y="694" width="8.7" height="11.6" fill="#0b7a4e" shape-rendering="crispEdges"/>
<rect x="333" y="700" width="19.6" height="8.7" fill="#00e696" shape-rendering="crispEdges"/>
<rect x="330.8" y="707.5" width="12.2" height="9.7" fill="#c4c4c4" shape-rendering="crispEdges"/>
<rect x="332.5" y="708" width="3.5" height="3" fill="#e8a030" shape-rendering="crispEdges"/>
<rect x="330.8" y="717.2" width="25.5" height="11.0" fill="#0b7a4e" shape-rendering="crispEdges"/>
<rect x="339" y="717.2" width="17.3" height="4.8" fill="#00e696" shape-rendering="crispEdges"/>
<rect x="342.4" y="722" width="7.6" height="5" fill="#c4c4c4" shape-rendering="crispEdges"/>
<rect x="276" y="714.8" width="8.6" height="10.2" fill="#00e696" shape-rendering="crispEdges"/>
<rect x="288.2" y="710" width="12.2" height="12" fill="#0b7a4e" shape-rendering="crispEdges"/>
<rect x="277.3" y="686.8" width="7.7" height="7.2" fill="#00a8e0" shape-rendering="crispEdges"/>
<rect x="279" y="688" width="4" height="4" fill="#0b7a4e" shape-rendering="crispEdges"/>
<rect x="295.5" y="684.5" width="2.5" height="2.5" fill="#00a8e0" shape-rendering="crispEdges"/>
<rect x="285" y="668.6" width="7.4" height="6.8" fill="#0b7a4e" shape-rendering="crispEdges"/>
<rect x="287" y="670.5" width="3.5" height="3.0" fill="#00e696" shape-rendering="crispEdges"/>
<rect x="285.8" y="663.3" width="1.8" height="2.9" fill="#1a6cff" shape-rendering="crispEdges"/>
<g shape-rendering="crispEdges">
<rect x="271" y="634" width="2" height="2" fill="#4a2ae8" />
<rect x="272" y="623" width="2" height="2" fill="#5a22e0" />
<rect x="270" y="629" width="2" height="1" fill="#4a2ae8" />
<rect x="284" y="635" width="2" height="1" fill="#5a22e0" />
<rect x="269" y="630" width="2" height="2" fill="#4a2ae8" />
<rect x="270" y="628" width="2" height="1" fill="#3c32f0" />
<rect x="282" y="631" width="2" height="1" fill="#3c32f0" />
<rect x="270" y="624" width="1" height="2" fill="#5a22e0" />
<rect x="278" y="634" width="2" height="1" fill="#3c32f0" />
<rect x="272" y="633" width="1" height="2" fill="#5a22e0" />
<rect x="278" y="637" width="2" height="1" fill="#5a22e0" />
<rect x="284" y="634" width="1" height="2" fill="#4a2ae8" />
<rect x="271" y="638" width="1" height="1" fill="#3c32f0" />
<rect x="280" y="638" width="2" height="2" fill="#2a3cff" />
<rect x="274" y="632" width="1" height="2" fill="#5a22e0" />
<rect x="277" y="632" width="1" height="2" fill="#4a2ae8" />
<rect x="271" y="625" width="2" height="1" fill="#3c32f0" />
<rect x="284" y="631" width="1" height="2" fill="#4a2ae8" />
<rect x="269" y="631" width="2" height="1" fill="#3c32f0" />
<rect x="272" y="634" width="2" height="1" fill="#4a2ae8" />
<rect x="287" y="632" width="2" height="1" fill="#3c32f0" />
<rect x="279" y="635" width="2" height="2" fill="#5a22e0" />
<rect x="285" y="637" width="2" height="2" fill="#1a4cff" />
<rect x="285" y="631" width="2" height="1" fill="#4a2ae8" />
<rect x="281" y="631" width="1" height="1" fill="#5a22e0" />
<rect x="269" y="629" width="1" height="2" fill="#4a2ae8" />
<rect x="270" y="633" width="1" height="2" fill="#4a2ae8" />
<rect x="282" y="637" width="1" height="2" fill="#3c32f0" />
<rect x="280" y="637" width="1" height="2" fill="#5a22e0" />
<rect x="271" y="617" width="1" height="2" fill="#3c32f0" />
<rect x="281" y="630" width="2" height="1" fill="#5a22e0" />
<rect x="269" y="625" width="2" height="2" fill="#4a2ae8" />
<rect x="276" y="633" width="1" height="1" fill="#5a22e0" />
<rect x="278" y="636" width="2" height="1" fill="#5a22e0" />
<rect x="277" y="639" width="2" height="1" fill="#1a4cff" />
<rect x="283" y="632" width="1" height="1" fill="#3c32f0" />
<rect x="280" y="634" width="1" height="1" fill="#5a22e0" />
<rect x="273" y="638" width="2" height="2" fill="#2a3cff" />
<rect x="267" y="626" width="2" height="1" fill="#3c32f0" />
<rect x="272" y="620" width="2" height="2" fill="#4a2ae8" />
<rect x="275" y="623" width="1" height="2" fill="#5a22e0" />
<rect x="282" y="632" width="1" height="1" fill="#3c32f0" />
<rect x="271" y="633" width="2" height="2" fill="#3c32f0" />
<rect x="266" y="626" width="2" height="1" fill="#4a2ae8" />
<rect x="265" y="626" width="1" height="2" fill="#2a3cff" />
<rect x="268" y="631" width="2" height="2" fill="#4a2ae8" />
<rect x="281" y="629" width="2" height="1" fill="#3c32f0" />
<rect x="273" y="616" width="2" height="2" fill="#3c32f0" />
<rect x="272" y="618" width="2" height="2" fill="#4a2ae8" />
<rect x="272" y="624" width="1" height="2" fill="#5a22e0" />
<rect x="268" y="629" width="2" height="1" fill="#3c32f0" />
<rect x="269" y="633" width="2" height="1" fill="#4a2ae8" />
<rect x="274" y="633" width="1" height="2" fill="#5a22e0" />
<rect x="282" y="638" width="2" height="2" fill="#3c32f0" />
<rect x="272" y="621" width="2" height="1" fill="#5a22e0" />
<rect x="266" y="629" width="1" height="2" fill="#3c32f0" />
<rect x="279" y="639" width="1" height="1" fill="#1a4cff" />
<rect x="268" y="634" width="2" height="1" fill="#1a4cff" />
<rect x="273" y="620" width="1" height="2" fill="#3c32f0" />
<rect x="268" y="636" width="2" height="2" fill="#2a3cff" />
<rect x="269" y="633" width="2" height="2" fill="#5a22e0" />
<rect x="275" y="638" width="2" height="1" fill="#4a2ae8" />
<rect x="269" y="627" width="2" height="2" fill="#4a2ae8" />
<rect x="273" y="625" width="2" height="2" fill="#3c32f0" />
<rect x="280" y="637" width="1" height="1" fill="#4a2ae8" />
<rect x="265" y="621" width="2" height="1" fill="#1a4cff" />
<rect x="267" y="629" width="1" height="2" fill="#4a2ae8" />
<rect x="280" y="637" width="1" height="2" fill="#4a2ae8" />
<rect x="284" y="631" width="1" height="1" fill="#5a22e0" />
<rect x="279" y="637" width="2" height="2" fill="#5a22e0" />
<rect x="266" y="636" width="2" height="2" fill="#1a4cff" />
<rect x="273" y="623" width="2" height="1" fill="#5a22e0" />
<rect x="272" y="632" width="2" height="2" fill="#3c32f0" />
<rect x="266" y="632" width="2" height="2" fill="#2a3cff" />
<rect x="270" y="628" width="2" height="2" fill="#5a22e0" />
<rect x="281" y="633" width="1" height="2" fill="#4a2ae8" />
<rect x="267" y="633" width="2" height="2" fill="#4a2ae8" />
<rect x="271" y="622" width="1" height="2" fill="#3c32f0" />
<rect x="275" y="635" width="2" height="1" fill="#4a2ae8" />
<rect x="279" y="638" width="1" height="1" fill="#2a3cff" />
<rect x="268" y="632" width="2" height="1" fill="#3c32f0" />
<rect x="273" y="616" width="2" height="2" fill="#3c32f0" />
<rect x="270" y="636" width="2" height="1" fill="#3c32f0" />
<rect x="269" y="624" width="2" height="2" fill="#5a22e0" />
<rect x="271" y="630" width="2" height="2" fill="#5a22e0" />
<rect x="276" y="635" width="1" height="2" fill="#5a22e0" />
<rect x="267" y="619" width="2" height="2" fill="#3c32f0" />
<rect x="270" y="632" width="2" height="1" fill="#3c32f0" />
<rect x="272" y="628" width="2" height="2" fill="#3c32f0" />
<rect x="265" y="634" width="2" height="1" fill="#1a4cff" />
<rect x="271" y="627" width="2" height="2" fill="#5a22e0" />
<rect x="271" y="618" width="2" height="1" fill="#4a2ae8" />
<rect x="272" y="631" width="2" height="2" fill="#4a2ae8" />
<rect x="276" y="633" width="1" height="2" fill="#5a22e0" />
<rect x="283" y="636" width="1" height="1" fill="#3c32f0" />
<rect x="278" y="630" width="2" height="2" fill="#4a2ae8" />
<rect x="274" y="636" width="2" height="2" fill="#3c32f0" />
<rect x="266" y="631" width="2" height="2" fill="#3c32f0" />
<rect x="279" y="635" width="1" height="2" fill="#4a2ae8" />
<rect x="266" y="629" width="1" height="2" fill="#5a22e0" />
<rect x="279" y="636" width="1" height="2" fill="#5a22e0" />
<rect x="279" y="636" width="1" height="1" fill="#5a22e0" />
<rect x="271" y="619" width="1" height="2" fill="#4a2ae8" />
<rect x="265" y="630" width="1" height="1" fill="#1a4cff" />
<rect x="273" y="622" width="1" height="2" fill="#3c32f0" />
<rect x="282" y="633" width="2" height="2" fill="#4a2ae8" />
<rect x="271" y="624" width="2" height="2" fill="#4a2ae8" />
<rect x="272" y="624" width="2" height="2" fill="#5a22e0" />
<rect x="269" y="617" width="2" height="2" fill="#1a4cff" />
<rect x="269" y="628" width="1" height="1" fill="#5a22e0" />
<rect x="273" y="630" width="2" height="2" fill="#5a22e0" />
<rect x="271" y="620" width="1" height="1" fill="#3c32f0" />
<rect x="280" y="637" width="2" height="1" fill="#2a3cff" />
<rect x="271" y="629" width="2" height="1" fill="#5a22e0" />
<rect x="269" y="624" width="2" height="2" fill="#4a2ae8" />
<rect x="275" y="633" width="1" height="2" fill="#4a2ae8" />
<rect x="265" y="626" width="2" height="2" fill="#1a4cff" />
<rect x="274" y="635" width="2" height="1" fill="#3c32f0" />
<rect x="284" y="635" width="1" height="2" fill="#4a2ae8" />
<rect x="268" y="618" width="2" height="2" fill="#2a3cff" />
<rect x="280" y="636" width="2" height="2" fill="#4a2ae8" />
<rect x="271" y="619" width="2" height="1" fill="#3c32f0" />
<rect x="269" y="618" width="2" height="2" fill="#3c32f0" />
<rect x="269" y="624" width="1" height="1" fill="#5a22e0" />
<rect x="270" y="623" width="1" height="2" fill="#3c32f0" />
<rect x="273" y="616" width="1" height="2" fill="#1a4cff" />
<rect x="272" y="618" width="1" height="2" fill="#4a2ae8" />
<rect x="273" y="633" width="2" height="2" fill="#3c32f0" />
<rect x="274" y="618" width="1" height="2" fill="#5a22e0" />
<rect x="275" y="623" width="1" height="2" fill="#5a22e0" />
<rect x="278" y="635" width="1" height="1" fill="#5a22e0" />
<rect x="273" y="627" width="2" height="2" fill="#4a2ae8" />
<rect x="271" y="620" width="2" height="2" fill="#5a22e0" />
<rect x="264" y="633" width="2" height="2" fill="#3c32f0" />
<rect x="283" y="633" width="2" height="1" fill="#3c32f0" />
<rect x="271" y="639" width="2" height="2" fill="#2a3cff" />
<rect x="269" y="630" width="2" height="2" fill="#4a2ae8" />
<rect x="269" y="632" width="2" height="2" fill="#4a2ae8" />
<rect x="271" y="632" width="2" height="2" fill="#4a2ae8" />
<rect x="272" y="626" width="2" height="1" fill="#3c32f0" />
<rect x="268" y="628" width="2" height="1" fill="#5a22e0" />
<rect x="270" y="619" width="2" height="2" fill="#3c32f0" />
<rect x="274" y="622" width="2" height="2" fill="#3c32f0" />
<rect x="267" y="636" width="1" height="2" fill="#1a4cff" />
<rect x="284" y="635" width="1" height="1" fill="#4a2ae8" />
<rect x="271" y="629" width="2" height="2" fill="#5a22e0" />
<rect x="283" y="636" width="2" height="1" fill="#2a3cff" />
<rect x="281" y="634" width="2" height="2" fill="#5a22e0" />
<rect x="267" y="630" width="2" height="2" fill="#5a22e0" />
<rect x="268" y="623" width="2" height="2" fill="#3c32f0" />
<rect x="281" y="634" width="2" height="2" fill="#5a22e0" />
<rect x="269" y="629" width="2" height="2" fill="#4a2ae8" />
<rect x="267" y="625" width="2" height="2" fill="#3c32f0" />
<rect x="270" y="625" width="2" height="2" fill="#3c32f0" />
<rect x="270" y="618" width="2" height="1" fill="#1a4cff" />
<rect x="283" y="630" width="2" height="1" fill="#3c32f0" />
<rect x="282" y="634" width="1" height="2" fill="#3c32f0" />
<rect x="280" y="633" width="2" height="2" fill="#4a2ae8" />
<rect x="274" y="634" width="2" height="1" fill="#4a2ae8" />
<rect x="272" y="624" width="2" height="2" fill="#3c32f0" />
<rect x="268" y="621" width="2" height="2" fill="#4a2ae8" />
<rect x="278" y="638" width="1" height="2" fill="#4a2ae8" />
<rect x="269" y="621" width="2" height="2" fill="#4a2ae8" />
<rect x="271" y="623" width="2" height="2" fill="#5a22e0" />
<rect x="284" y="635" width="2" height="1" fill="#1a4cff" />
<rect x="271" y="635" width="2" height="2" fill="#5a22e0" />
<rect x="273" y="625" width="1" height="2" fill="#4a2ae8" />
<rect x="267" y="630" width="2" height="2" fill="#4a2ae8" />
<rect x="274" y="638" width="2" height="2" fill="#1a4cff" />
<rect x="269" y="625" width="2" height="2" fill="#3c32f0" />
<rect x="271" y="634" width="2" height="2" fill="#5a22e0" />
<rect x="265" y="634" width="2" height="1" fill="#2a3cff" />
<rect x="271" y="638" width="1" height="1" fill="#3c32f0" />
<rect x="274" y="635" width="2" height="2" fill="#4a2ae8" />
<rect x="267" y="631" width="2" height="2" fill="#5a22e0" />
<rect x="269" y="623" width="2" height="1" fill="#5a22e0" />
<rect x="281" y="636" width="1" height="1" fill="#4a2ae8" />
<rect x="269" y="632" width="2" height="1" fill="#5a22e0" />
<rect x="266" y="628" width="2" height="2" fill="#3c32f0" />
<rect x="276" y="636" width="1" height="2" fill="#4a2ae8" />
<rect x="265" y="624" width="1" height="2" fill="#1a4cff" />
<rect x="271" y="627" width="2" height="1" fill="#5a22e0" />
<rect x="268" y="626" width="2" height="2" fill="#5a22e0" />
<rect x="273" y="634" width="2" height="1" fill="#4a2ae8" />
<rect x="270" y="633" width="1" height="2" fill="#5a22e0" />
<rect x="272" y="628" width="2" height="1" fill="#5a22e0" />
<rect x="267" y="621" width="2" height="2" fill="#4a2ae8" />
<rect x="283" y="631" width="1" height="2" fill="#3c32f0" />
<rect x="270" y="617" width="2" height="1" fill="#1a4cff" />
<rect x="274" y="619" width="2" height="1" fill="#3c32f0" />
<rect x="273" y="635" width="1" height="2" fill="#4a2ae8" />
<rect x="276" y="633" width="1" height="1" fill="#5a22e0" />
<rect x="271" y="619" width="2" height="2" fill="#3c32f0" />
<rect x="274" y="623" width="1" height="1" fill="#3c32f0" />
<rect x="274" y="636" width="2" height="2" fill="#5a22e0" />
<rect x="270" y="629" width="2" height="2" fill="#3c32f0" />
<rect x="281" y="636" width="2" height="2" fill="#4a2ae8" />
<rect x="272" y="619" width="2" height="2" fill="#4a2ae8" />
<rect x="272" y="621" width="1" height="2" fill="#5a22e0" />
<rect x="271" y="621" width="1" height="2" fill="#3c32f0" />
<rect x="273" y="617" width="1" height="2" fill="#4a2ae8" />
<rect x="270" y="617" width="2" height="2" fill="#2a3cff" />
<rect x="268" y="622" width="1" height="2" fill="#5a22e0" />
<rect x="280" y="634" width="2" height="1" fill="#4a2ae8" />
<rect x="263" y="629" width="2" height="2" fill="#2a3cff" />
<rect x="284" y="633" width="1" height="1" fill="#3c32f0" />
<rect x="267" y="621" width="1" height="2" fill="#1a4cff" />
<rect x="277" y="637" width="2" height="2" fill="#3c32f0" />
<rect x="268" y="636" width="2" height="2" fill="#3c32f0" />
<rect x="276" y="638" width="1" height="2" fill="#4a2ae8" />
<rect x="284" y="635" width="1" height="2" fill="#3c32f0" />
<rect x="272" y="635" width="2" height="2" fill="#4a2ae8" />
<rect x="272" y="635" width="2" height="2" fill="#4a2ae8" />
<rect x="280" y="630" width="1" height="2" fill="#3c32f0" />
<rect x="273" y="635" width="2" height="2" fill="#3c32f0" />
<rect x="284" y="631" width="2" height="1" fill="#5a22e0" />
<rect x="276" y="633" width="2" height="1" fill="#3c32f0" />
<rect x="273" y="622" width="2" height="2" fill="#5a22e0" />
<rect x="265" y="623" width="2" height="2" fill="#2a3cff" />
<rect x="281" y="632" width="2" height="1" fill="#4a2ae8" />
<rect x="274" y="639" width="2" height="2" fill="#3c32f0" />
<rect x="268" y="628" width="1" height="1" fill="#4a2ae8" />
<rect x="279" y="632" width="2" height="2" fill="#5a22e0" />
<rect x="279" y="633" width="2" height="2" fill="#3c32f0" />
<rect x="271" y="626" width="1" height="1" fill="#3c32f0" />
<rect x="271" y="636" width="2" height="2" fill="#4a2ae8" />
<rect x="280" y="633" width="2" height="2" fill="#3c32f0" />
<rect x="268" y="635" width="1" height="2" fill="#3c32f0" />
<rect x="272" y="636" width="2" height="2" fill="#3c32f0" />
<rect x="271" y="631" width="2" height="2" fill="#3c32f0" />
<rect x="271" y="628" width="1" height="2" fill="#4a2ae8" />
<rect x="275" y="634" width="2" height="2" fill="#3c32f0" />
<rect x="281" y="636" width="2" height="1" fill="#4a2ae8" />
<rect x="274" y="635" width="2" height="2" fill="#3c32f0" />
<rect x="281" y="638" width="2" height="1" fill="#3c32f0" />
<rect x="273" y="629" width="1" height="1" fill="#5a22e0" />
<rect x="281" y="634" width="2" height="2" fill="#4a2ae8" />
<rect x="274" y="639" width="2" height="2" fill="#2a3cff" />
<rect x="271" y="621" width="1" height="1" fill="#5a22e0" />
<rect x="271" y="620" width="1" height="2" fill="#5a22e0" />
<rect x="273" y="622" width="2" height="2" fill="#5a22e0" />
<rect x="283" y="637" width="2" height="2" fill="#1a4cff" />
<rect x="272" y="622" width="2" height="1" fill="#5a22e0" />
<rect x="280" y="635" width="2" height="1" fill="#3c32f0" />
<rect x="272" y="636" width="1" height="2" fill="#5a22e0" />
<rect x="266" y="623" width="2" height="2" fill="#2a3cff" />
<rect x="266" y="628" width="1" height="2" fill="#3c32f0" />
<rect x="272" y="631" width="1" height="2" fill="#4a2ae8" />
<rect x="273" y="634" width="2" height="1" fill="#3c32f0" />
<rect x="270" y="630" width="1" height="2" fill="#5a22e0" />
<rect x="270" y="627" width="2" height="1" fill="#4a2ae8" />
<rect x="271" y="633" width="2" height="2" fill="#5a22e0" />
<rect x="267" y="624" width="2" height="2" fill="#4a2ae8" />
<rect x="272" y="634" width="1" height="2" fill="#5a22e0" />
<rect x="275" y="636" width="1" height="2" fill="#4a2ae8" />
<rect x="272" y="621" width="2" height="2" fill="#5a22e0" />
<rect x="274" y="634" width="2" height="1" fill="#4a2ae8" />
<rect x="278" y="638" width="2" height="2" fill="#1a4cff" />
<rect x="273" y="619" width="2" height="1" fill="#3c32f0" />
<rect x="268" y="632" width="1" height="2" fill="#3c32f0" />
<rect x="273" y="618" width="2" height="2" fill="#5a22e0" />
<rect x="271" y="624" width="2" height="2" fill="#5a22e0" />
<rect x="280" y="631" width="1" height="1" fill="#5a22e0" />
<rect x="270" y="620" width="1" height="2" fill="#4a2ae8" />
<rect x="278" y="634" width="1" height="1" fill="#4a2ae8" />
<rect x="271" y="634" width="2" height="1" fill="#5a22e0" />
<rect x="274" y="636" width="2" height="1" fill="#3c32f0" />
<rect x="272" y="633" width="2" height="1" fill="#4a2ae8" />
<rect x="270" y="616" width="1" height="1" fill="#2a3cff" />
<rect x="276" y="639" width="1" height="2" fill="#1a4cff" />
<rect x="270" y="622" width="1" height="1" fill="#4a2ae8" />
<rect x="267" y="629" width="1" height="2" fill="#5a22e0" />
<rect x="270" y="628" width="2" height="1" fill="#3c32f0" />
<rect x="275" y="638" width="2" height="2" fill="#4a2ae8" />
<rect x="271" y="621" width="2" height="1" fill="#4a2ae8" />
<rect x="281" y="637" width="2" height="2" fill="#1a4cff" />
<rect x="279" y="633" width="2" height="2" fill="#3c32f0" />
<rect x="276" y="634" width="2" height="1" fill="#5a22e0" />
<rect x="270" y="629" width="1" height="2" fill="#4a2ae8" />
<rect x="278" y="633" width="1" height="2" fill="#5a22e0" />
<rect x="274" y="619" width="1" height="2" fill="#5a22e0" />
<rect x="274" y="624" width="2" height="2" fill="#5a22e0" />
<rect x="278" y="638" width="1" height="2" fill="#3c32f0" />
<rect x="275" y="621" width="2" height="2" fill="#3c32f0" />
<rect x="271" y="630" width="1" height="2" fill="#3c32f0" />
<rect x="270" y="635" width="1" height="2" fill="#4a2ae8" />
<rect x="280" y="630" width="2" height="2" fill="#5a22e0" />
<rect x="266" y="628" width="2" height="2" fill="#5a22e0" />
<rect x="269" y="622" width="2" height="2" fill="#5a22e0" />
<rect x="281" y="637" width="1" height="2" fill="#3c32f0" />
<rect x="271" y="635" width="2" height="2" fill="#5a22e0" />
<rect x="270" y="624" width="2" height="1" fill="#4a2ae8" />
<rect x="269" y="621" width="1" height="1" fill="#4a2ae8" />
<rect x="267" y="630" width="2" height="1" fill="#5a22e0" />
<rect x="275" y="636" width="2" height="2" fill="#5a22e0" />
<rect x="269" y="633" width="1" height="1" fill="#3c32f0" />
<rect x="271" y="620" width="2" height="2" fill="#5a22e0" />
<rect x="278" y="633" width="2" height="1" fill="#4a2ae8" />
<rect x="266" y="626" width="2" height="2" fill="#5a22e0" />
<rect x="268" y="624" width="2" height="1" fill="#5a22e0" />
<rect x="274" y="634" width="2" height="2" fill="#4a2ae8" />
<rect x="268" y="621" width="2" height="2" fill="#3c32f0" />
<rect x="270" y="634" width="1" height="1" fill="#5a22e0" />
<rect x="269" y="634" width="1" height="2" fill="#3c32f0" />
<rect x="270" y="635" width="1" height="1" fill="#3c32f0" />
<rect x="272" y="635" width="2" height="2" fill="#3c32f0" />
<rect x="276" y="635" width="1" height="2" fill="#3c32f0" />
<rect x="274" y="617" width="2" height="1" fill="#5a22e0" />
<rect x="276" y="633" width="2" height="2" fill="#3c32f0" />
<rect x="281" y="632" width="2" height="2" fill="#4a2ae8" />
<rect x="278" y="633" width="2" height="1" fill="#5a22e0" />
<rect x="268" y="625" width="1" height="2" fill="#5a22e0" />
<rect x="268" y="619" width="2" height="2" fill="#1a4cff" />
<rect x="270" y="624" width="1" height="1" fill="#4a2ae8" />
<rect x="267" y="622" width="1" height="2" fill="#4a2ae8" />
<rect x="279" y="635" width="2" height="2" fill="#4a2ae8" />
<rect x="269" y="633" width="2" height="1" fill="#3c32f0" />
<rect x="269" y="631" width="2" height="2" fill="#3c32f0" />
<rect x="274" y="634" width="2" height="1" fill="#3c32f0" />
<rect x="268" y="625" width="2" height="2" fill="#5a22e0" />
<rect x="278" y="632" width="1" height="2" fill="#3c32f0" />
<rect x="273" y="620" width="2" height="1" fill="#3c32f0" />
<rect x="283" y="631" width="2" height="1" fill="#4a2ae8" />
<rect x="270" y="622" width="2" height="2" fill="#4a2ae8" />
<rect x="283" y="632" width="2" height="1" fill="#3c32f0" />
<rect x="280" y="635" width="1" height="1" fill="#3c32f0" />
<rect x="276" y="635" width="2" height="1" fill="#5a22e0" />
<rect x="269" y="632" width="2" height="2" fill="#4a2ae8" />
<rect x="270" y="627" width="2" height="2" fill="#3c32f0" />
<rect x="268" y="626" width="2" height="2" fill="#4a2ae8" />
<rect x="278" y="634" width="2" height="1" fill="#4a2ae8" />
<rect x="283" y="636" width="2" height="2" fill="#3c32f0" />
<rect x="267" y="632" width="2" height="2" fill="#5a22e0" />
<rect x="265" y="627" width="2" height="2" fill="#1a4cff" />
<rect x="275" y="633" width="1" height="2" fill="#4a2ae8" />
<rect x="277" y="638" width="2" height="2" fill="#3c32f0" />
<rect x="283" y="632" width="2" height="2" fill="#4a2ae8" />
<rect x="270" y="626" width="1" height="2" fill="#4a2ae8" />
<rect x="269" y="624" width="1" height="2" fill="#5a22e0" />
<rect x="282" y="633" width="1" height="2" fill="#4a2ae8" />
<rect x="267" y="631" width="2" height="2" fill="#5a22e0" />
<rect x="270" y="617" width="2" height="1" fill="#1a4cff" />
<rect x="272" y="621" width="2" height="2" fill="#4a2ae8" />
<rect x="276" y="637" width="1" height="1" fill="#4a2ae8" />
<rect x="283" y="631" width="2" height="2" fill="#4a2ae8" />
<rect x="277" y="637" width="2" height="2" fill="#3c32f0" />
<rect x="273" y="634" width="1" height="2" fill="#4a2ae8" />
<rect x="270" y="626" width="2" height="1" fill="#3c32f0" />
<rect x="268" y="629" width="1" height="2" fill="#4a2ae8" />
<rect x="283" y="633" width="2" height="2" fill="#4a2ae8" />
<rect x="281" y="630" width="2" height="2" fill="#5a22e0" />
<rect x="270" y="633" width="1" height="2" fill="#3c32f0" />
<rect x="279" y="633" width="1" height="1" fill="#5a22e0" />
<rect x="267" y="634" width="1" height="1" fill="#2a3cff" />
<rect x="267" y="632" width="1" height="2" fill="#3c32f0" />
<rect x="267" y="621" width="2" height="2" fill="#3c32f0" />
<rect x="274" y="638" width="2" height="1" fill="#2a3cff" />
<rect x="267" y="626" width="1" height="1" fill="#3c32f0" />
<rect x="275" y="637" width="2" height="2" fill="#5a22e0" />
<rect x="272" y="634" width="2" height="2" fill="#5a22e0" />
<rect x="278" y="634" width="2" height="1" fill="#4a2ae8" />
<rect x="271" y="619" width="1" height="1" fill="#3c32f0" />
<rect x="272" y="621" width="2" height="2" fill="#4a2ae8" />
<rect x="272" y="631" width="2" height="1" fill="#4a2ae8" />
<rect x="274" y="635" width="2" height="2" fill="#5a22e0" />
<rect x="278" y="636" width="2" height="2" fill="#4a2ae8" />
<rect x="275" y="635" width="2" height="1" fill="#3c32f0" />
<rect x="269" y="630" width="1" height="2" fill="#5a22e0" />
<rect x="270" y="625" width="1" height="1" fill="#3c32f0" />
<rect x="273" y="636" width="2" height="1" fill="#3c32f0" />
<rect x="273" y="619" width="1" height="2" fill="#5a22e0" />
<rect x="268" y="627" width="2" height="2" fill="#5a22e0" />
<rect x="273" y="636" width="1" height="1" fill="#3c32f0" />
<rect x="271" y="626" width="1" height="2" fill="#3c32f0" />
<rect x="274" y="636" width="2" height="2" fill="#3c32f0" />
<rect x="270" y="618" width="1" height="2" fill="#4a2ae8" />
<rect x="283" y="632" width="2" height="1" fill="#5a22e0" />
<rect x="273" y="636" width="2" height="2" fill="#3c32f0" />
<rect x="270" y="627" width="1" height="2" fill="#4a2ae8" />
<rect x="279" y="632" width="2" height="2" fill="#4a2ae8" />
<rect x="281" y="633" width="2" height="2" fill="#3c32f0" />
<rect x="270" y="630" width="2" height="2" fill="#4a2ae8" />
<rect x="278" y="635" width="2" height="2" fill="#4a2ae8" />
<rect x="271" y="630" width="2" height="2" fill="#3c32f0" />
<rect x="281" y="631" width="1" height="1" fill="#4a2ae8" />
<rect x="274" y="619" width="2" height="2" fill="#3c32f0" />
<rect x="270" y="623" width="1" height="2" fill="#3c32f0" />
<rect x="266" y="629" width="2" height="1" fill="#4a2ae8" />
<rect x="271" y="617" width="2" height="2" fill="#2a3cff" />
<rect x="286" y="634" width="2" height="1" fill="#1a4cff" />
<rect x="269" y="627" width="2" height="2" fill="#3c32f0" />
<rect x="283" y="632" width="1" height="2" fill="#3c32f0" />
<rect x="284" y="631" width="2" height="2" fill="#3c32f0" />
<rect x="272" y="637" width="1" height="2" fill="#5a22e0" />
<rect x="272" y="636" width="2" height="1" fill="#4a2ae8" />
<rect x="282" y="630" width="2" height="2" fill="#4a2ae8" />
<rect x="273" y="636" width="2" height="2" fill="#4a2ae8" />
<rect x="272" y="633" width="2" height="2" fill="#3c32f0" />
<rect x="270" y="629" width="2" height="1" fill="#3c32f0" />
<rect x="279" y="637" width="2" height="2" fill="#5a22e0" />
<rect x="279" y="634" width="1" height="2" fill="#3c32f0" />
<rect x="274" y="635" width="2" height="2" fill="#3c32f0" />
<rect x="281" y="630" width="1" height="1" fill="#5a22e0" />
<rect x="271" y="621" width="1" height="2" fill="#5a22e0" />
<rect x="274" y="619" width="2" height="2" fill="#3c32f0" />
<rect x="266" y="622" width="1" height="2" fill="#2a3cff" />
<rect x="272" y="638" width="2" height="2" fill="#1a4cff" />
<rect x="275" y="621" width="2" height="2" fill="#5a22e0" />
<rect x="274" y="623" width="2" height="2" fill="#5a22e0" />
<rect x="269" y="619" width="2" height="2" fill="#3c32f0" />
<rect x="272" y="616" width="2" height="2" fill="#1a4cff" />
<rect x="268" y="625" width="2" height="2" fill="#4a2ae8" />
<rect x="270" y="632" width="2" height="1" fill="#5a22e0" />
<rect x="273" y="630" width="2" height="2" fill="#5a22e0" />
<rect x="276" y="632" width="2" height="1" fill="#3c32f0" />
<rect x="270" y="631" width="2" height="2" fill="#4a2ae8" />
<rect x="275" y="637" width="2" height="1" fill="#5a22e0" />
<rect x="272" y="623" width="1" height="1" fill="#4a2ae8" />
<rect x="281" y="638" width="1" height="1" fill="#1a4cff" />
<rect x="266" y="635" width="1" height="1" fill="#1a4cff" />
<rect x="270" y="626" width="2" height="1" fill="#4a2ae8" />
<rect x="267" y="633" width="2" height="2" fill="#1a4cff" />
<rect x="274" y="621" width="2" height="2" fill="#3c32f0" />
<rect x="269" y="623" width="1" height="2" fill="#3c32f0" />
<rect x="269" y="620" width="1" height="1" fill="#5a22e0" />
<rect x="271" y="624" width="1" height="2" fill="#4a2ae8" />
<rect x="274" y="621" width="1" height="2" fill="#4a2ae8" />
<rect x="280" y="634" width="2" height="2" fill="#5a22e0" />
<rect x="273" y="623" width="1" height="2" fill="#5a22e0" />
<rect x="265" y="629" width="1" height="2" fill="#3c32f0" />
<rect x="268" y="627" width="2" height="2" fill="#3c32f0" />
<rect x="275" y="636" width="2" height="2" fill="#4a2ae8" />
<rect x="278" y="633" width="1" height="2" fill="#3c32f0" />
<rect x="272" y="629" width="1" height="2" fill="#4a2ae8" />
<rect x="272" y="619" width="2" height="1" fill="#4a2ae8" />
<rect x="281" y="629" width="2" height="2" fill="#3c32f0" />
<rect x="274" y="634" width="1" height="1" fill="#4a2ae8" />
<rect x="282" y="632" width="2" height="2" fill="#4a2ae8" />
<rect x="277" y="633" width="1" height="2" fill="#3c32f0" />
<rect x="270" y="632" width="2" height="1" fill="#4a2ae8" />
<rect x="276" y="638" width="1" height="2" fill="#2a3cff" />
<rect x="270" y="628" width="2" height="1" fill="#4a2ae8" />
<rect x="268" y="624" width="2" height="1" fill="#4a2ae8" />
<rect x="274" y="634" width="2" height="2" fill="#5a22e0" />
<rect x="273" y="620" width="1" height="2" fill="#5a22e0" />
<rect x="273" y="628" width="1" height="2" fill="#4a2ae8" />
<rect x="272" y="622" width="2" height="2" fill="#4a2ae8" />
<rect x="284" y="636" width="1" height="2" fill="#3c32f0" />
<rect x="268" y="628" width="1" height="2" fill="#3c32f0" />
<rect x="280" y="629" width="2" height="2" fill="#5a22e0" />
<rect x="274" y="638" width="2" height="2" fill="#1a4cff" />
<rect x="279" y="632" width="2" height="2" fill="#3c32f0" />
<rect x="275" y="637" width="1" height="1" fill="#5a22e0" />
<rect x="272" y="614" width="2" height="1" fill="#2a3cff" />
<rect x="267" y="628" width="1" height="2" fill="#3c32f0" />
<rect x="266" y="628" width="2" height="2" fill="#3c32f0" />
<rect x="279" y="635" width="2" height="2" fill="#3c32f0" />
<rect x="284" y="635" width="1" height="2" fill="#3c32f0" />
<rect x="266" y="626" width="2" height="2" fill="#4a2ae8" />
<rect x="269" y="635" width="2" height="1" fill="#2a3cff" />
<rect x="286" y="632" width="1" height="2" fill="#1a4cff" />
<rect x="272" y="635" width="1" height="2" fill="#3c32f0" />
<rect x="274" y="618" width="2" height="1" fill="#3c32f0" />
<rect x="280" y="631" width="2" height="2" fill="#5a22e0" />
<rect x="275" y="634" width="2" height="2" fill="#5a22e0" />
<rect x="282" y="631" width="1" height="2" fill="#4a2ae8" />
<rect x="280" y="632" width="2" height="1" fill="#3c32f0" />
<rect x="281" y="635" width="2" height="2" fill="#3c32f0" />
<rect x="266" y="630" width="2" height="1" fill="#1a4cff" />
<rect x="279" y="637" width="2" height="2" fill="#3c32f0" />
<rect x="270" y="626" width="2" height="1" fill="#5a22e0" />
<rect x="272" y="635" width="2" height="1" fill="#5a22e0" />
<rect x="273" y="634" width="2" height="2" fill="#3c32f0" />
<rect x="284" y="636" width="2" height="1" fill="#2a3cff" />
<rect x="265" y="628" width="2" height="2" fill="#1a4cff" />
<rect x="274" y="622" width="2" height="2" fill="#5a22e0" />
<rect x="270" y="625" width="1" height="2" fill="#4a2ae8" />
<rect x="269" y="623" width="2" height="2" fill="#5a22e0" />
<rect x="273" y="631" width="1" height="1" fill="#5a22e0" />
<rect x="269" y="632" width="1" height="2" fill="#4a2ae8" />
<rect x="282" y="633" width="2" height="2" fill="#4a2ae8" />
<rect x="273" y="619" width="2" height="2" fill="#5a22e0" />
<rect x="284" y="631" width="1" height="2" fill="#3c32f0" />
<rect x="265" y="631" width="2" height="2" fill="#2a3cff" />
<rect x="274" y="634" width="2" height="1" fill="#5a22e0" />
<rect x="275" y="636" width="2" height="1" fill="#5a22e0" />
<rect x="271" y="622" width="2" height="2" fill="#5a22e0" />
<rect x="269" y="628" width="2" height="2" fill="#3c32f0" />
<rect x="271" y="627" width="2" height="2" fill="#3c32f0" />
<rect x="282" y="630" width="2" height="2" fill="#3c32f0" />
<rect x="277" y="641" width="1" height="2" fill="#2a3cff" />
<rect x="268" y="629" width="2" height="2" fill="#4a2ae8" />
<rect x="287" y="633" width="2" height="2" fill="#1a4cff" />
<rect x="286" y="632" width="2" height="2" fill="#4a2ae8" />
<rect x="265" y="629" width="1" height="1" fill="#1a4cff" />
<rect x="270" y="635" width="2" height="2" fill="#4a2ae8" />
<rect x="273" y="632" width="2" height="2" fill="#4a2ae8" />
<rect x="281" y="631" width="2" height="2" fill="#4a2ae8" />
<rect x="267" y="625" width="2" height="2" fill="#4a2ae8" />
<rect x="273" y="619" width="1" height="2" fill="#3c32f0" />
<rect x="275" y="633" width="1" height="2" fill="#3c32f0" />
<rect x="273" y="630" width="2" height="1" fill="#4a2ae8" />
<rect x="264" y="627" width="2" height="2" fill="#2a3cff" />
<rect x="269" y="623" width="1" height="2" fill="#4a2ae8" />
<rect x="270" y="625" width="2" height="1" fill="#5a22e0" />
<rect x="286" y="632" width="2" height="2" fill="#5a22e0" />
<rect x="268" y="630" width="2" height="2" fill="#4a2ae8" />
<rect x="268" y="630" width="1" height="2" fill="#5a22e0" />
<rect x="268" y="626" width="2" height="2" fill="#3c32f0" />
<rect x="278" y="634" width="2" height="2" fill="#5a22e0" />
<rect x="286" y="634" width="2" height="1" fill="#2a3cff" />
<rect x="268" y="626" width="1" height="2" fill="#5a22e0" />
<rect x="280" y="635" width="2" height="2" fill="#5a22e0" />
<rect x="271" y="632" width="1" height="2" fill="#5a22e0" />
<rect x="275" y="638" width="2" height="2" fill="#1a4cff" />
<rect x="268" y="631" width="2" height="1" fill="#4a2ae8" />
<rect x="269" y="637" width="2" height="1" fill="#2a3cff" />
<rect x="277" y="633" width="2" height="2" fill="#3c32f0" />
<rect x="271" y="628" width="2" height="1" fill="#3c32f0" />
<rect x="269" y="618" width="2" height="2" fill="#3c32f0" />
<rect x="292" y="638" width="1" height="1" fill="#4a2ae8" />
<rect x="288" y="608" width="1" height="1" fill="#1a4cff" />
<rect x="276" y="631" width="2" height="1" fill="#2a3cff" />
<rect x="270" y="614" width="2" height="1" fill="#1a4cff" />
<rect x="275" y="632" width="1" height="1" fill="#2a3cff" />
<rect x="282" y="600" width="1" height="1" fill="#2a3cff" />
<rect x="288" y="644" width="1" height="1" fill="#4a2ae8" />
<rect x="294" y="636" width="1" height="1" fill="#4a2ae8" />
<rect x="276" y="604" width="2" height="1" fill="#4a2ae8" />
<rect x="275" y="631" width="1" height="1" fill="#4a2ae8" />
<rect x="278" y="614" width="1" height="1" fill="#4a2ae8" />
<rect x="261" y="639" width="2" height="1" fill="#4a2ae8" />
<rect x="273" y="645" width="1" height="1" fill="#1a4cff" />
<rect x="283" y="622" width="2" height="1" fill="#4a2ae8" />
<rect x="297" y="635" width="1" height="1" fill="#4a2ae8" />
<rect x="285" y="622" width="1" height="1" fill="#2a3cff" />
<rect x="270" y="631" width="2" height="1" fill="#4a2ae8" />
<rect x="282" y="627" width="2" height="1" fill="#1a4cff" />
<rect x="295" y="622" width="2" height="1" fill="#4a2ae8" />
<rect x="290" y="632" width="1" height="1" fill="#1a4cff" />
<rect x="263" y="622" width="1" height="1" fill="#1a4cff" />
<rect x="281" y="619" width="1" height="1" fill="#2a3cff" />
<rect x="282" y="643" width="1" height="1" fill="#4a2ae8" />
<rect x="298" y="615" width="1" height="1" fill="#1a4cff" />
<rect x="284" y="618" width="1" height="1" fill="#4a2ae8" />
<rect x="274" y="633" width="2" height="1" fill="#1a4cff" />
<rect x="291" y="605" width="1" height="1" fill="#4a2ae8" />
<rect x="258" y="625" width="2" height="1" fill="#4a2ae8" />
<rect x="262" y="612" width="1" height="1" fill="#1a4cff" />
<rect x="277" y="615" width="1" height="1" fill="#1a4cff" />
<rect x="293" y="639" width="1" height="1" fill="#2a3cff" />
<rect x="298" y="629" width="2" height="1" fill="#4a2ae8" />
<rect x="258" y="622" width="2" height="1" fill="#1a4cff" />
<rect x="283" y="624" width="1" height="1" fill="#2a3cff" />
<rect x="283" y="612" width="1" height="1" fill="#1a4cff" />
<rect x="272" y="629" width="1" height="1" fill="#2a3cff" />
<rect x="288" y="628" width="2" height="1" fill="#2a3cff" />
<rect x="263" y="623" width="2" height="1" fill="#1a4cff" />
<rect x="288" y="618" width="1" height="1" fill="#1a4cff" />
<rect x="279" y="639" width="1" height="1" fill="#2a3cff" />
<rect x="283" y="642" width="2" height="1" fill="#2a3cff" />
<rect x="261" y="614" width="2" height="1" fill="#1a4cff" />
<rect x="280" y="634" width="1" height="1" fill="#4a2ae8" />
<rect x="266" y="642" width="2" height="1" fill="#1a4cff" />
<rect x="280" y="608" width="1" height="1" fill="#4a2ae8" />
<rect x="276" y="613" width="1" height="1" fill="#1a4cff" />
<rect x="253" y="638" width="1" height="1" fill="#4a2ae8" />
<rect x="260" y="643" width="1" height="1" fill="#1a4cff" />
<rect x="259" y="634" width="1" height="1" fill="#2a3cff" />
<rect x="286" y="624" width="1" height="1" fill="#4a2ae8" />
<rect x="258" y="613" width="1" height="1" fill="#1a4cff" />
<rect x="282" y="626" width="1" height="1" fill="#2a3cff" />
<rect x="283" y="620" width="1" height="1" fill="#1a4cff" />
<rect x="294" y="607" width="1" height="1" fill="#2a3cff" />
<rect x="281" y="631" width="2" height="1" fill="#2a3cff" />
<rect x="285" y="621" width="1" height="1" fill="#4a2ae8" />
<rect x="265" y="603" width="2" height="1" fill="#4a2ae8" />
<rect x="263" y="628" width="1" height="1" fill="#2a3cff" />
<rect x="290" y="643" width="1" height="1" fill="#4a2ae8" />
<rect x="271" y="630" width="1" height="1" fill="#2a3cff" />
<rect x="266" y="594" width="4" height="3" fill="#1a6cff" />
<rect x="270" y="593" width="3" height="3" fill="#00a8e0" />
<rect x="275" y="595" width="3" height="2" fill="#1a6cff" />
<rect x="272" y="598" width="5" height="2" fill="#1a6cff" />
<rect x="281" y="597" width="4" height="3" fill="#00a8e0" />
<rect x="261" y="604" width="5" height="3" fill="#1a6cff" />
<rect x="264" y="606" width="3" height="2" fill="#00a8e0" />
<rect x="269" y="604" width="3" height="2" fill="#1a6cff" />
<rect x="286" y="603" width="2" height="3" fill="#1a6cff" />
<rect x="257" y="611" width="5" height="3" fill="#1a6cff" />
<rect x="258" y="612" width="2" height="1" fill="#00a8e0" />
<rect x="266" y="601" width="2" height="2" fill="#1a6cff" />
<rect x="293" y="615" width="2" height="3" fill="#00a8e0" />
<rect x="302" y="615" width="4" height="5" fill="#1a6cff" />
<rect x="303" y="617" width="2" height="3" fill="#00a8e0" />
<rect x="244" y="622" width="5" height="4" fill="#1a6cff" />
<rect x="246" y="624" width="4" height="4" fill="#00a8e0" />
<rect x="250" y="622" width="3" height="3" fill="#1a6cff" />
<rect x="252" y="625" width="2" height="3" fill="#1a6cff" />
<rect x="256" y="620" width="5" height="3" fill="#00a8e0" />
<rect x="253" y="618" width="1" height="3" fill="#1a6cff" />
<rect x="297" y="627" width="3" height="4" fill="#e8a030" />
<rect x="299" y="628" width="2" height="3" fill="#fff" />
<rect x="300" y="629" width="2" height="2" fill="#ffd700" />
<rect x="306" y="628" width="3" height="3" fill="#1a6cff" />
<rect x="310" y="633" width="3" height="3" fill="#1a6cff" />
<rect x="309" y="628" width="2" height="3" fill="#1a6cff" />
<rect x="293" y="633" width="3" height="2" fill="#1a6cff" />
<rect x="295" y="635" width="4" height="2" fill="#1a6cff" />
<rect x="296" y="636" width="3" height="3" fill="#00e696" />
<rect x="292" y="630" width="1" height="3" fill="#1a6cff" />
<rect x="274" y="645" width="3" height="2" fill="#00a8e0" />
<rect x="275" y="646" width="3" height="3" fill="#00e696" />
<rect x="278" y="643" width="1" height="2" fill="#1a6cff" />
<rect x="288" y="643" width="3" height="3" fill="#00a8e0" />
<rect x="290" y="645" width="3" height="3" fill="#c4c4c4" />
<rect x="291" y="645" width="1" height="1" fill="#e8a030" />
<rect x="292" y="647" width="3" height="3" fill="#0b7a4e" />
<rect x="295" y="650" width="4" height="4" fill="#00a8e0" />
<rect x="298" y="642" width="2" height="3" fill="#1a6cff" />
<rect x="300" y="640" width="3" height="2" fill="#1a6cff" />
<rect x="286" y="638" width="3" height="2" fill="#00a8e0" />
<rect x="288" y="639" width="1" height="3" fill="#1a6cff" />
<rect x="271" y="639" width="2" height="1" fill="#1a6cff" />
<rect x="271" y="642" width="2" height="1" fill="#1a6cff" />
<rect x="246" y="640" width="3" height="5" fill="#00a8e0" />
<rect x="246" y="640" width="3" height="2" fill="#1a6cff" />
<rect x="256" y="647" width="4" height="6" fill="#1a6cff" />
<rect x="258" y="646" width="2" height="2" fill="#00a8e0" />
<rect x="294" y="626" width="3" height="1" fill="#1a6cff" />
</g>
<circle cx="275.5" cy="624.3" r="27.9" fill="none" stroke="#fff" stroke-width="1" shape-rendering="crispEdges"/>
<circle cx="275.5" cy="624.3" r="55.8" fill="none" stroke="#fff" stroke-width="1" shape-rendering="crispEdges"/>
<circle cx="275.5" cy="624.3" r="83.7" fill="none" stroke="#fff" stroke-width="1" shape-rendering="crispEdges"/>
<circle cx="275.5" cy="624.3" r="111.6" fill="none" stroke="#fff" stroke-width="1" shape-rendering="crispEdges"/>
<circle cx="275.5" cy="624.3" r="139.5" fill="none" stroke="#fff" stroke-width="1" shape-rendering="crispEdges"/>
<circle cx="275.5" cy="624.3" r="167.4" fill="none" stroke="#fff" stroke-width="1" shape-rendering="crispEdges"/>
<circle cx="275.5" cy="624.3" r="195.3" fill="none" stroke="#fff" stroke-width="1" shape-rendering="crispEdges"/>
<circle cx="275.5" cy="624.3" r="223.2" fill="none" stroke="#fff" stroke-width="1" shape-rendering="crispEdges"/>
<line x1="55" y1="624.5" x2="247.6" y2="624.5" stroke="#fff" stroke-width="1" />
<line x1="303.4" y1="624.5" x2="487" y2="624.5" stroke="#fff" stroke-width="1" />
<line x1="275.5" y1="457.5" x2="275.5" y2="596.4" stroke="#fff" stroke-width="1" />
<line x1="275.5" y1="652.1999999999999" x2="275.5" y2="794.5" stroke="#fff" stroke-width="1" />
<line x1="295.2" y1="644.0" x2="433.3" y2="782.1" stroke="#fff" stroke-width="1" shape-rendering="crispEdges"/>
<line x1="255.8" y1="644.0" x2="117.7" y2="782.1" stroke="#fff" stroke-width="1" shape-rendering="crispEdges"/>
<line x1="255.8" y1="604.6" x2="117.7" y2="466.5" stroke="#fff" stroke-width="1" shape-rendering="crispEdges"/>
<line x1="295.2" y1="604.6" x2="433.3" y2="466.5" stroke="#fff" stroke-width="1" shape-rendering="crispEdges"/>
<polyline points="269.0,625.6 300.0,626.5 340.0,629.0 400.0,633.0 435.5,635.4" fill="none" stroke="#ff0000" stroke-width="2.8" stroke-linecap="butt"/>
<polyline points="272.0,626.8 285.0,626.8" fill="none" stroke="#ff0000" stroke-width="1" stroke-dasharray="1,1"/>
<polyline points="273.0,624.0 277.0,621.5 281.0,620.0 284.0,619.5" fill="none" stroke="#ff2020" stroke-width="1" stroke-dasharray="2,1"/>
</g>
<line x1="433" y1="506.5" x2="444" y2="506.5" stroke="#ffec8b" stroke-width="1" shape-rendering="crispEdges"/>
<line x1="438.5" y1="501" x2="438.5" y2="512" stroke="#ffec8b" stroke-width="1" shape-rendering="crispEdges"/>
<text x="41" y="506" font-size="5" fill="#ffec8b" text-anchor="start" font-family="Liberation Sans" font-weight="normal" >10</text>
<text x="431" y="808" font-size="5.5" fill="#ffec8b" text-anchor="start" font-family="Liberation Sans" font-weight="normal" textLength="12" lengthAdjust="spacingAndGlyphs" >-100</text>
<text x="14.5" y="448" font-size="25.5" fill="#ffff00" text-anchor="start" font-family="Liberation Sans" font-weight="normal" textLength="231" lengthAdjust="spacingAndGlyphs" stroke="#ffff00" stroke-width="0" >2-aug-1997,09:05:00</text>
<text x="260" y="448" font-size="25.5" fill="#fff" text-anchor="start" font-family="Liberation Sans" font-weight="normal" textLength="259" lengthAdjust="spacingAndGlyphs" stroke="#fff" stroke-width="0" >maxdz plot.  maxdz plot.</text>
<text x="16" y="479.5" font-size="25.5" fill="#fff" text-anchor="start" font-family="Liberation Sans" font-weight="normal" textLength="156" lengthAdjust="spacingAndGlyphs" stroke="#fff" stroke-width="0" >rhb_met track.</text>
<line x1="487" y1="458.5" x2="573" y2="458.5" stroke="#aaa" stroke-width="1" />
<text x="490" y="470.5" font-size="17" fill="#fff" text-anchor="start" font-family="Liberation Sans" font-weight="normal" textLength="52" lengthAdjust="spacingAndGlyphs" stroke="#fff" stroke-width="0.25" >maxdz</text>
<rect x="490" y="485" width="10" height="7" fill="#ff8080" shape-rendering="crispEdges"/>
<rect x="490" y="492" width="10" height="7" fill="#ff8c96" shape-rendering="crispEdges"/>
<rect x="490" y="499" width="10" height="7" fill="#ffb060" shape-rendering="crispEdges"/>
<rect x="490" y="506" width="10" height="7" fill="#ffd8b0" shape-rendering="crispEdges"/>
<rect x="490" y="513" width="10" height="7" fill="#ffd700" shape-rendering="crispEdges"/>
<rect x="490" y="520" width="10" height="7" fill="#e8b020" shape-rendering="crispEdges"/>
<rect x="490" y="527" width="10" height="7" fill="#d89030" shape-rendering="crispEdges"/>
<rect x="490" y="534" width="10" height="7" fill="#c4c4c4" shape-rendering="crispEdges"/>
<rect x="490" y="541" width="10" height="7" fill="#0b7048" shape-rendering="crispEdges"/>
<rect x="490" y="548" width="10" height="7" fill="#00e696" shape-rendering="crispEdges"/>
<rect x="490" y="555" width="10" height="7" fill="#00b0e0" shape-rendering="crispEdges"/>
<rect x="490" y="562" width="10" height="7" fill="#1070e8" shape-rendering="crispEdges"/>
<rect x="490" y="569" width="10" height="7" fill="#2040e8" shape-rendering="crispEdges"/>
<rect x="490" y="576" width="10" height="7" fill="#5020e8" shape-rendering="crispEdges"/>
<rect x="490" y="583" width="10" height="7" fill="#7000f0" shape-rendering="crispEdges"/>
<rect x="490" y="590" width="10" height="7" fill="#8c00ff" shape-rendering="crispEdges"/>
<text x="506" y="493" font-size="17" fill="#fff" text-anchor="start" font-family="Liberation Sans" font-weight="normal" stroke="#fff" stroke-width="0.25" >65.0</text>
<text x="506" y="521" font-size="17" fill="#fff" text-anchor="start" font-family="Liberation Sans" font-weight="normal" stroke="#fff" stroke-width="0.25" >45.0</text>
<text x="506" y="549" font-size="17" fill="#fff" text-anchor="start" font-family="Liberation Sans" font-weight="normal" stroke="#fff" stroke-width="0.25" >25.0</text>
<text x="506" y="577" font-size="17" fill="#fff" text-anchor="start" font-family="Liberation Sans" font-weight="normal" stroke="#fff" stroke-width="0.25" >5.0</text>
<text x="506" y="605" font-size="17" fill="#fff" text-anchor="start" font-family="Liberation Sans" font-weight="normal" stroke="#fff" stroke-width="0.25" >−15.0</text>
<line x1="487" y1="626.5" x2="573" y2="626.5" stroke="#aaa" stroke-width="1" />
<text x="490" y="638.5" font-size="17" fill="#fff" text-anchor="start" font-family="Liberation Sans" font-weight="normal" textLength="52" lengthAdjust="spacingAndGlyphs" stroke="#fff" stroke-width="0.25" >maxdz</text>
<rect x="490" y="653" width="10" height="7" fill="#ff8080" shape-rendering="crispEdges"/>
<rect x="490" y="660" width="10" height="7" fill="#ff8c96" shape-rendering="crispEdges"/>
<rect x="490" y="667" width="10" height="7" fill="#ffb060" shape-rendering="crispEdges"/>
<rect x="490" y="674" width="10" height="7" fill="#ffd8b0" shape-rendering="crispEdges"/>
<rect x="490" y="681" width="10" height="7" fill="#ffd700" shape-rendering="crispEdges"/>
<rect x="490" y="688" width="10" height="7" fill="#e8b020" shape-rendering="crispEdges"/>
<rect x="490" y="695" width="10" height="7" fill="#d89030" shape-rendering="crispEdges"/>
<rect x="490" y="702" width="10" height="7" fill="#c4c4c4" shape-rendering="crispEdges"/>
<rect x="490" y="709" width="10" height="7" fill="#0b7048" shape-rendering="crispEdges"/>
<rect x="490" y="716" width="10" height="7" fill="#00e696" shape-rendering="crispEdges"/>
<rect x="490" y="723" width="10" height="7" fill="#00b0e0" shape-rendering="crispEdges"/>
<rect x="490" y="730" width="10" height="7" fill="#1070e8" shape-rendering="crispEdges"/>
<rect x="490" y="737" width="10" height="7" fill="#2040e8" shape-rendering="crispEdges"/>
<rect x="490" y="744" width="10" height="7" fill="#5020e8" shape-rendering="crispEdges"/>
<rect x="490" y="751" width="10" height="7" fill="#7000f0" shape-rendering="crispEdges"/>
<rect x="490" y="758" width="10" height="7" fill="#8c00ff" shape-rendering="crispEdges"/>
<text x="506" y="661" font-size="17" fill="#fff" text-anchor="start" font-family="Liberation Sans" font-weight="normal" stroke="#fff" stroke-width="0.25" >65.0</text>
<text x="506" y="689" font-size="17" fill="#fff" text-anchor="start" font-family="Liberation Sans" font-weight="normal" stroke="#fff" stroke-width="0.25" >45.0</text>
<text x="506" y="717" font-size="17" fill="#fff" text-anchor="start" font-family="Liberation Sans" font-weight="normal" stroke="#fff" stroke-width="0.25" >25.0</text>
<text x="506" y="745" font-size="17" fill="#fff" text-anchor="start" font-family="Liberation Sans" font-weight="normal" stroke="#fff" stroke-width="0.25" >5.0</text>
<text x="506" y="773" font-size="17" fill="#fff" text-anchor="start" font-family="Liberation Sans" font-weight="normal" stroke="#fff" stroke-width="0.25" >−15.0</text>
<line x1="487" y1="794.5" x2="573" y2="794.5" stroke="#aaa" stroke-width="1" />
<line x1="488" y1="819.5" x2="573" y2="819.5" stroke="#aaa" stroke-width="1" />
<text x="489.4" y="807.7" font-size="9.8" fill="#ff0000" text-anchor="start" font-family="Liberation Sans" font-weight="normal" textLength="38.8" lengthAdjust="spacingAndGlyphs" >rhb_met</text>
<text x="381" y="860.6" font-size="25.5" fill="#fff" text-anchor="start" font-family="Liberation Sans" font-weight="normal" textLength="181" lengthAdjust="spacingAndGlyphs" stroke="#fff" stroke-width="0" >Alt: 0.50 km MSL</text>
<rect x="5.5" y="376.5" width="45" height="47" fill="#191970" stroke="#8a8a8a" stroke-width="1"/>
<path d="M11.90,388.30 C12.33,387.90 13.10,386.62 14.50,385.90 C15.90,385.18 18.85,384.35 20.30,384.00 C21.75,383.65 21.95,383.58 23.20,383.80 C24.45,384.02 26.35,384.77 27.80,385.30 C29.25,385.83 30.65,386.53 31.90,387.00 C33.15,387.47 34.05,388.02 35.30,388.10 C36.55,388.18 38.13,387.95 39.40,387.50 C40.67,387.05 42.32,385.75 42.90,385.40" fill="none" stroke="#ffff00" stroke-width="2.0" stroke-linecap="round"/>
<path d="M42.90,385.60 C42.42,386.37 41.65,388.77 40.00,390.20 C38.35,391.63 35.12,393.02 33.00,394.20 C30.88,395.38 29.22,395.92 27.30,397.30 C25.38,398.68 23.05,400.88 21.50,402.50 C19.95,404.12 19.65,404.87 18.00,407.00 C16.35,409.13 12.67,413.92 11.60,415.30" fill="none" stroke="#ffff00" stroke-width="1.7" stroke-linecap="round"/>
<path d="M11.60,415.30 C12.00,415.00 13.03,413.95 14.00,413.50 C14.97,413.05 15.58,412.72 17.40,412.60 C19.22,412.48 22.97,412.47 24.90,412.80 C26.83,413.13 27.65,414.00 29.00,414.60 C30.35,415.20 31.55,416.05 33.00,416.40 C34.45,416.75 36.35,416.97 37.70,416.70 C39.05,416.43 40.10,415.67 41.10,414.80 C42.10,413.93 43.27,412.05 43.70,411.50" fill="none" stroke="#ffff00" stroke-width="2.0" stroke-linecap="round"/>
<rect x="52.5" y="376.5" width="45" height="47" fill="#191970" stroke="#8a8a8a" stroke-width="1"/>
<text x="55" y="390.9" font-size="15" fill="#ffff00" text-anchor="start" font-family="Liberation Sans" font-weight="bold" textLength="30" lengthAdjust="spacingAndGlyphs" stroke="#ffff00" stroke-width="0.7">GOES</text>
<pattern id="gs52376" width="2" height="2" patternUnits="userSpaceOnUse"><rect width="2" height="2" fill="#191970"/><rect width="1" height="1" fill="#ffff00"/><rect x="1" y="1" width="1" height="1" fill="#ffff00"/></pattern>
<path d="M55,393 h7 q14,7 14,27 h-21 z" fill="url(#gs52376)"/>
<path d="M55.2,392.7 h5.2 l-5.2,4 z M66,400 l3.5,-2.6 q4.5,4 5.5,11 l-5,0.5 q-4,-3 -4,-8.9 z M55.2,420 v-6 q4,-3 8.7,0 v6 z" fill="#ffff00"/>
<path d="M75.2,400 L90.8,398.3 M76,407.4 L90.8,399.2" stroke="#ffff00" stroke-width="1" stroke-dasharray="1,1.3" fill="none"/>
<path d="M92.5,394.8 l2.6,2.6 l-2.6,2.6 l-2.6,-2.6 z" fill="#ffff00"/>
<rect x="71" y="394" width="1" height="1" fill="#ffff00" shape-rendering="crispEdges"/>
<rect x="76" y="397" width="1" height="1" fill="#ffff00" shape-rendering="crispEdges"/>
<rect x="83" y="396" width="1" height="1" fill="#ffff00" shape-rendering="crispEdges"/>
<rect x="92" y="406" width="1" height="1" fill="#ffff00" shape-rendering="crispEdges"/>
<rect x="87" y="408" width="1" height="1" fill="#ffff00" shape-rendering="crispEdges"/>
<rect x="77" y="418" width="1" height="1" fill="#ffff00" shape-rendering="crispEdges"/>
<text x="81.7" y="418.7" font-size="10.5" fill="#ffff00" text-anchor="start" font-family="Liberation Sans" font-weight="normal" textLength="9.2" lengthAdjust="spacingAndGlyphs" stroke="none">IR</text>
<rect x="99.5" y="376.5" width="45" height="47" fill="#191970" stroke="#8a8a8a" stroke-width="1"/>
<path d="M104.7,385.3 q3,17 21.7,21.7" stroke="#ffff00" stroke-width="1.5" fill="none" stroke-linecap="round"/>
<path d="M110.8,400 h3.9 l0.4,8.3 v7.4 h-7.3 v-6.7 l1.4,-2 z" fill="#ffff00"/>
<rect x="112.5" y="396.6" width="2.6" height="3.4" stroke="#ffff00" stroke-width="0.8" fill="none"/>
<text x="135.1" y="393.1" font-size="14.5" fill="#ffff00" text-anchor="middle" font-family="Liberation Sans" font-weight="normal" textLength="6.2" lengthAdjust="spacingAndGlyphs" stroke="none">S</text>
<text x="135.1" y="404.6" font-size="14.5" fill="#ffff00" text-anchor="middle" font-family="Liberation Sans" font-weight="normal" textLength="6.2" lengthAdjust="spacingAndGlyphs" stroke="none">U</text>
<text x="135.1" y="416.1" font-size="14.5" fill="#ffff00" text-anchor="middle" font-family="Liberation Sans" font-weight="normal" textLength="6.2" lengthAdjust="spacingAndGlyphs" stroke="none">R</text>
<rect x="146.5" y="376.5" width="45" height="47" fill="#686868" stroke="#8a8a8a" stroke-width="1"/>
<rect x="151.5" y="381.5" width="35" height="36" stroke="#e4e4e4" stroke-width="1" fill="none" shape-rendering="crispEdges"/>
<line x1="160.2" y1="381" x2="160.2" y2="417" stroke="#e4e4e4" stroke-width="1" fill="none" shape-rendering="crispEdges"/>
<line x1="151" y1="390.5" x2="187" y2="390.5" stroke="#e4e4e4" stroke-width="1" fill="none" shape-rendering="crispEdges"/>
<line x1="169.0" y1="381" x2="169.0" y2="417" stroke="#e4e4e4" stroke-width="1" fill="none" shape-rendering="crispEdges"/>
<line x1="151" y1="399.5" x2="187" y2="399.5" stroke="#e4e4e4" stroke-width="1" fill="none" shape-rendering="crispEdges"/>
<line x1="177.8" y1="381" x2="177.8" y2="417" stroke="#e4e4e4" stroke-width="1" fill="none" shape-rendering="crispEdges"/>
<line x1="151" y1="408.5" x2="187" y2="408.5" stroke="#e4e4e4" stroke-width="1" fill="none" shape-rendering="crispEdges"/>
<path d="M158,384 q3,18 22,23" stroke="#e4e4e4" stroke-width="1.6" fill="none"/>
<path d="M165,398 l2,1 l1,16 h-6 z" fill="#e4e4e4"/>
<rect x="193.5" y="376.5" width="13" height="47" fill="#686868" stroke="#8a8a8a" stroke-width="1"/>
<text x="200.5" y="386.8" font-size="6.8" fill="#e4e4e4" text-anchor="middle" font-family="Liberation Sans" font-weight="normal" stroke="none">B</text>
<text x="200.5" y="392.90000000000003" font-size="6.8" fill="#e4e4e4" text-anchor="middle" font-family="Liberation Sans" font-weight="normal" stroke="none">O</text>
<text x="200.5" y="399.0" font-size="6.8" fill="#e4e4e4" text-anchor="middle" font-family="Liberation Sans" font-weight="normal" stroke="none">U</text>
<text x="200.5" y="405.1" font-size="6.8" fill="#e4e4e4" text-anchor="middle" font-family="Liberation Sans" font-weight="normal" stroke="none">N</text>
<text x="200.5" y="411.2" font-size="6.8" fill="#e4e4e4" text-anchor="middle" font-family="Liberation Sans" font-weight="normal" stroke="none">D</text>
<text x="200.5" y="417.3" font-size="6.8" fill="#e4e4e4" text-anchor="middle" font-family="Liberation Sans" font-weight="normal" stroke="none">S</text>
<rect x="208.5" y="400.5" width="21" height="23" fill="#191970" stroke="#8a8a8a" stroke-width="1"/>
<rect x="211.5" y="404.5" width="15" height="15" stroke="#ffff00" stroke-width="1" fill="none" shape-rendering="crispEdges"/>
<line x1="216.5" y1="404" x2="216.5" y2="420" stroke="#ffff00" stroke-width="1" fill="none" shape-rendering="crispEdges"/>
<line x1="211" y1="409.5" x2="227" y2="409.5" stroke="#ffff00" stroke-width="1" fill="none" shape-rendering="crispEdges"/>
<line x1="221.5" y1="404" x2="221.5" y2="420" stroke="#ffff00" stroke-width="1" fill="none" shape-rendering="crispEdges"/>
<line x1="211" y1="414.5" x2="227" y2="414.5" stroke="#ffff00" stroke-width="1" fill="none" shape-rendering="crispEdges"/>
<rect x="231.5" y="376.5" width="20" height="47" fill="#191970" stroke="#8a8a8a" stroke-width="1"/>
<path d="M234,381.5 l3,-1.3 l3.5,0.3 l-1,3 l-1.5,1 l0.5,2.5 l-2,-0.5 l-1,-2.5 z M235,387.5 l2.5,0.5 l-0.5,3 l-1.5,-1.2 z M241.5,381 l2,-1 l1.5,1.2 l2,-1.2 l3,0 l-1.5,1.5 l-2,0.3 l0.8,2 l-1.6,-0.2 l-1,-1.6 l-2,0.5 z M243.8,384.6 l3,0.2 l0.8,2.2 l-1.3,3.6 l-1.5,-2.4 z M248.5,387 l1.5,1.5 l-1,1 z" fill="#ffff00"/>
<text x="241.5" y="400.8" font-size="9" fill="#ffff00" text-anchor="middle" font-family="Liberation Sans" font-weight="normal" stroke="none">M</text>
<text x="241.5" y="408.55" font-size="9" fill="#ffff00" text-anchor="middle" font-family="Liberation Sans" font-weight="normal" stroke="none">A</text>
<text x="241.5" y="416.3" font-size="9" fill="#ffff00" text-anchor="middle" font-family="Liberation Sans" font-weight="normal" stroke="none">P</text>
<rect x="253.5" y="376.5" width="20" height="47" fill="#686868" stroke="#8a8a8a" stroke-width="1"/>
<ellipse cx="263.9" cy="399.7" rx="7.2" ry="9" fill="none" stroke="#e4e4e4" stroke-width="1.7"/>
<ellipse cx="263.9" cy="399.7" rx="5" ry="6.3" fill="none" stroke="#e4e4e4" stroke-width="1" stroke-dasharray="2,1"/>
<ellipse cx="263.9" cy="399.7" rx="2.8" ry="3.4" fill="none" stroke="#e4e4e4" stroke-width="1.2"/>
<path d="M256.7,399.7 h4.4 M266.7,399.7 h4.4 M263.9,390.7 v5.6 M263.9,403.1 v5.6 M258.8,393.3 l3,3.6 M269,393.3 l-3,3.6 M258.8,406.1 l3,-3.6 M269,406.1 l-3,-3.6" stroke="#e4e4e4" stroke-width="1" fill="none"/>
<rect x="275.5" y="400.5" width="21" height="23" fill="#191970" stroke="#8a8a8a" stroke-width="1"/>
<rect x="285.2" y="405.5" width="1" height="1.5" fill="#ffff00" shape-rendering="crispEdges"/>
<rect x="283.2" y="406.8" width="5" height="4.9" fill="#ffff00" shape-rendering="crispEdges"/>
<rect x="284.3" y="407.9" width="0.8" height="3.2" fill="#30003a" />
<rect x="286.3" y="407.9" width="0.8" height="3.2" fill="#30003a" />
<rect x="282.2" y="411.5" width="7" height="2" fill="#ffff00" shape-rendering="crispEdges"/>
<rect x="285.2" y="413.5" width="1" height="2" fill="#ffff00" shape-rendering="crispEdges"/>
<polygon points="280.7,415.5 290.7,415.5 288.7,418.1 282.7,418.1" fill="#ffff00" />
<path d="M277.5,416.8 l1.4,2.4 l1.6,-1.8 l1.6,1.8 l1.6,-1.8 l2,1.8 l2,-1.8 l1.6,1.8 l1.6,-1.8 l1.6,1.8 l1.4,-2.4" fill="none" stroke="#ffff00" stroke-width="1"/>
<rect x="298.5" y="376.5" width="45" height="47" fill="#686868" stroke="#8a8a8a" stroke-width="1"/>
<path d="M304,408 l2,6 h30 l2,-6 z" fill="none" stroke="#e4e4e4" stroke-width="1.2"/>
<path d="M307,408 v-8 h4 l3,8" fill="none" stroke="#e4e4e4" stroke-width="1.2"/>
<circle cx="320.5" cy="399" r="3" fill="none" stroke="#e4e4e4" stroke-width="1.2"/>
<path d="M320.5,402 v6 M332.5,392 v16" stroke="#e4e4e4" stroke-width="1.2" fill="none"/>
<path d="M301,420 v-5 l3,-2 l3,2 l3,-2 l3,2 l3,-2 l3,2 l3,-2 l3,2 l3,-2 l3,2 l3,-2 l3,2 l2,-2 v7 z" fill="#e4e4e4"/>
<rect x="10.5" y="821.5" width="45" height="47" fill="#191970" stroke="#8a8a8a" stroke-width="1"/>
<path d="M16.90,833.30 C17.33,832.90 18.10,831.62 19.50,830.90 C20.90,830.18 23.85,829.35 25.30,829.00 C26.75,828.65 26.95,828.58 28.20,828.80 C29.45,829.02 31.35,829.77 32.80,830.30 C34.25,830.83 35.65,831.53 36.90,832.00 C38.15,832.47 39.05,833.02 40.30,833.10 C41.55,833.18 43.13,832.95 44.40,832.50 C45.67,832.05 47.32,830.75 47.90,830.40" fill="none" stroke="#ffff00" stroke-width="2.0" stroke-linecap="round"/>
<path d="M47.90,830.60 C47.42,831.37 46.65,833.77 45.00,835.20 C43.35,836.63 40.12,838.02 38.00,839.20 C35.88,840.38 34.22,840.92 32.30,842.30 C30.38,843.68 28.05,845.88 26.50,847.50 C24.95,849.12 24.65,849.87 23.00,852.00 C21.35,854.13 17.67,858.92 16.60,860.30" fill="none" stroke="#ffff00" stroke-width="1.7" stroke-linecap="round"/>
<path d="M16.60,860.30 C17.00,860.00 18.03,858.95 19.00,858.50 C19.97,858.05 20.58,857.72 22.40,857.60 C24.22,857.48 27.97,857.47 29.90,857.80 C31.83,858.13 32.65,859.00 34.00,859.60 C35.35,860.20 36.55,861.05 38.00,861.40 C39.45,861.75 41.35,861.97 42.70,861.70 C44.05,861.43 45.10,860.67 46.10,859.80 C47.10,858.93 48.27,857.05 48.70,856.50" fill="none" stroke="#ffff00" stroke-width="2.0" stroke-linecap="round"/>
<rect x="57.5" y="821.5" width="45" height="47" fill="#686868" stroke="#8a8a8a" stroke-width="1"/>
<text x="60" y="835.9" font-size="15" fill="#e4e4e4" text-anchor="start" font-family="Liberation Sans" font-weight="bold" textLength="30" lengthAdjust="spacingAndGlyphs" stroke="#e4e4e4" stroke-width="0.7">GOES</text>
<pattern id="gs57821" width="2" height="2" patternUnits="userSpaceOnUse"><rect width="2" height="2" fill="#686868"/><rect width="1" height="1" fill="#e4e4e4"/><rect x="1" y="1" width="1" height="1" fill="#e4e4e4"/></pattern>
<path d="M60,838 h7 q14,7 14,27 h-21 z" fill="url(#gs57821)"/>
<path d="M60.2,837.7 h5.2 l-5.2,4 z M71,845 l3.5,-2.6 q4.5,4 5.5,11 l-5,0.5 q-4,-3 -4,-8.9 z M60.2,865 v-6 q4,-3 8.7,0 v6 z" fill="#e4e4e4"/>
<path d="M80.2,845 L95.8,843.3 M81,852.4 L95.8,844.2" stroke="#e4e4e4" stroke-width="1" stroke-dasharray="1,1.3" fill="none"/>
<path d="M97.5,839.8 l2.6,2.6 l-2.6,2.6 l-2.6,-2.6 z" fill="#e4e4e4"/>
<rect x="76" y="839" width="1" height="1" fill="#e4e4e4" shape-rendering="crispEdges"/>
<rect x="81" y="842" width="1" height="1" fill="#e4e4e4" shape-rendering="crispEdges"/>
<rect x="88" y="841" width="1" height="1" fill="#e4e4e4" shape-rendering="crispEdges"/>
<rect x="97" y="851" width="1" height="1" fill="#e4e4e4" shape-rendering="crispEdges"/>
<rect x="92" y="853" width="1" height="1" fill="#e4e4e4" shape-rendering="crispEdges"/>
<rect x="82" y="863" width="1" height="1" fill="#e4e4e4" shape-rendering="crispEdges"/>
<text x="86.7" y="863.7" font-size="10.5" fill="#e4e4e4" text-anchor="start" font-family="Liberation Sans" font-weight="normal" textLength="9.2" lengthAdjust="spacingAndGlyphs" stroke="none">IR</text>
<rect x="104.5" y="821.5" width="45" height="47" fill="#191970" stroke="#8a8a8a" stroke-width="1"/>
<path d="M109.7,830.3 q3,17 21.7,21.7" stroke="#ffff00" stroke-width="1.5" fill="none" stroke-linecap="round"/>
<path d="M115.8,845 h3.9 l0.4,8.3 v7.4 h-7.3 v-6.7 l1.4,-2 z" fill="#ffff00"/>
<rect x="117.5" y="841.6" width="2.6" height="3.4" stroke="#ffff00" stroke-width="0.8" fill="none"/>
<text x="140.1" y="838.1" font-size="14.5" fill="#ffff00" text-anchor="middle" font-family="Liberation Sans" font-weight="normal" textLength="6.2" lengthAdjust="spacingAndGlyphs" stroke="none">S</text>
<text x="140.1" y="849.6" font-size="14.5" fill="#ffff00" text-anchor="middle" font-family="Liberation Sans" font-weight="normal" textLength="6.2" lengthAdjust="spacingAndGlyphs" stroke="none">U</text>
<text x="140.1" y="861.1" font-size="14.5" fill="#ffff00" text-anchor="middle" font-family="Liberation Sans" font-weight="normal" textLength="6.2" lengthAdjust="spacingAndGlyphs" stroke="none">R</text>
<rect x="151.5" y="821.5" width="45" height="47" fill="#191970" stroke="#8a8a8a" stroke-width="1"/>
<rect x="156.5" y="826.5" width="35" height="36" stroke="#ffff00" stroke-width="1" fill="none" shape-rendering="crispEdges"/>
<line x1="165.2" y1="826" x2="165.2" y2="862" stroke="#ffff00" stroke-width="1" fill="none" shape-rendering="crispEdges"/>
<line x1="156" y1="835.5" x2="192" y2="835.5" stroke="#ffff00" stroke-width="1" fill="none" shape-rendering="crispEdges"/>
<line x1="174.0" y1="826" x2="174.0" y2="862" stroke="#ffff00" stroke-width="1" fill="none" shape-rendering="crispEdges"/>
<line x1="156" y1="844.5" x2="192" y2="844.5" stroke="#ffff00" stroke-width="1" fill="none" shape-rendering="crispEdges"/>
<line x1="182.8" y1="826" x2="182.8" y2="862" stroke="#ffff00" stroke-width="1" fill="none" shape-rendering="crispEdges"/>
<line x1="156" y1="853.5" x2="192" y2="853.5" stroke="#ffff00" stroke-width="1" fill="none" shape-rendering="crispEdges"/>
<path d="M163,829 q3,18 22,23" stroke="#ffff00" stroke-width="1.6" fill="none"/>
<path d="M170,843 l2,1 l1,16 h-6 z" fill="#ffff00"/>
<rect x="198.5" y="821.5" width="13" height="47" fill="#191970" stroke="#8a8a8a" stroke-width="1"/>
<text x="205.5" y="831.8" font-size="6.8" fill="#ffff00" text-anchor="middle" font-family="Liberation Sans" font-weight="normal" stroke="none">B</text>
<text x="205.5" y="837.9" font-size="6.8" fill="#ffff00" text-anchor="middle" font-family="Liberation Sans" font-weight="normal" stroke="none">O</text>
<text x="205.5" y="844.0" font-size="6.8" fill="#ffff00" text-anchor="middle" font-family="Liberation Sans" font-weight="normal" stroke="none">U</text>
<text x="205.5" y="850.0999999999999" font-size="6.8" fill="#ffff00" text-anchor="middle" font-family="Liberation Sans" font-weight="normal" stroke="none">N</text>
<text x="205.5" y="856.1999999999999" font-size="6.8" fill="#ffff00" text-anchor="middle" font-family="Liberation Sans" font-weight="normal" stroke="none">D</text>
<text x="205.5" y="862.3" font-size="6.8" fill="#ffff00" text-anchor="middle" font-family="Liberation Sans" font-weight="normal" stroke="none">S</text>
<rect x="213.5" y="845.5" width="21" height="23" fill="#191970" stroke="#8a8a8a" stroke-width="1"/>
<rect x="216.5" y="849.5" width="15" height="15" stroke="#ffff00" stroke-width="1" fill="none" shape-rendering="crispEdges"/>
<line x1="221.5" y1="849" x2="221.5" y2="865" stroke="#ffff00" stroke-width="1" fill="none" shape-rendering="crispEdges"/>
<line x1="216" y1="854.5" x2="232" y2="854.5" stroke="#ffff00" stroke-width="1" fill="none" shape-rendering="crispEdges"/>
<line x1="226.5" y1="849" x2="226.5" y2="865" stroke="#ffff00" stroke-width="1" fill="none" shape-rendering="crispEdges"/>
<line x1="216" y1="859.5" x2="232" y2="859.5" stroke="#ffff00" stroke-width="1" fill="none" shape-rendering="crispEdges"/>
<rect x="236.5" y="821.5" width="20" height="47" fill="#191970" stroke="#8a8a8a" stroke-width="1"/>
<path d="M239,826.5 l3,-1.3 l3.5,0.3 l-1,3 l-1.5,1 l0.5,2.5 l-2,-0.5 l-1,-2.5 z M240,832.5 l2.5,0.5 l-0.5,3 l-1.5,-1.2 z M246.5,826 l2,-1 l1.5,1.2 l2,-1.2 l3,0 l-1.5,1.5 l-2,0.3 l0.8,2 l-1.6,-0.2 l-1,-1.6 l-2,0.5 z M248.8,829.6 l3,0.2 l0.8,2.2 l-1.3,3.6 l-1.5,-2.4 z M253.5,832 l1.5,1.5 l-1,1 z" fill="#ffff00"/>
<text x="246.5" y="845.8" font-size="9" fill="#ffff00" text-anchor="middle" font-family="Liberation Sans" font-weight="normal" stroke="none">M</text>
<text x="246.5" y="853.55" font-size="9" fill="#ffff00" text-anchor="middle" font-family="Liberation Sans" font-weight="normal" stroke="none">A</text>
<text x="246.5" y="861.3" font-size="9" fill="#ffff00" text-anchor="middle" font-family="Liberation Sans" font-weight="normal" stroke="none">P</text>
<rect x="258.5" y="821.5" width="20" height="47" fill="#191970" stroke="#8a8a8a" stroke-width="1"/>
<ellipse cx="268.9" cy="844.7" rx="7.2" ry="9" fill="none" stroke="#ffff00" stroke-width="1.7"/>
<ellipse cx="268.9" cy="844.7" rx="5" ry="6.3" fill="none" stroke="#ffff00" stroke-width="1" stroke-dasharray="2,1"/>
<ellipse cx="268.9" cy="844.7" rx="2.8" ry="3.4" fill="none" stroke="#ffff00" stroke-width="1.2"/>
<path d="M261.7,844.7 h4.4 M271.7,844.7 h4.4 M268.9,835.7 v5.6 M268.9,848.1 v5.6 M263.8,838.3 l3,3.6 M274,838.3 l-3,3.6 M263.8,851.1 l3,-3.6 M274,851.1 l-3,-3.6" stroke="#ffff00" stroke-width="1" fill="none"/>
<rect x="280.5" y="845.5" width="21" height="23" fill="#191970" stroke="#8a8a8a" stroke-width="1"/>
<circle cx="291.5" cy="856.5" r="7.2" fill="none" stroke="#ffff00" stroke-width="1.2"/>
<rect x="303.5" y="821.5" width="45" height="47" fill="#191970" stroke="#8a8a8a" stroke-width="1"/>
<path d="M309,853 l2,6 h30 l2,-6 z" fill="none" stroke="#ffff00" stroke-width="1.2"/>
<path d="M312,853 v-8 h4 l3,8" fill="none" stroke="#ffff00" stroke-width="1.2"/>
<circle cx="325.5" cy="844" r="3" fill="none" stroke="#ffff00" stroke-width="1.2"/>
<path d="M325.5,847 v6 M337.5,837 v16" stroke="#ffff00" stroke-width="1.2" fill="none"/>
<path d="M306,865 v-5 l3,-2 l3,2 l3,-2 l3,2 l3,-2 l3,2 l3,-2 l3,2 l3,-2 l3,2 l3,-2 l3,2 l2,-2 v7 z" fill="#ffff00"/>
<pattern id="chk" width="2" height="2" patternUnits="userSpaceOnUse"><rect width="2" height="2" fill="#000"/><rect width="1" height="1" fill="#fff"/><rect x="1" y="1" width="1" height="1" fill="#fff"/></pattern>
<line x1="572.5" y1="2" x2="572.5" y2="386" stroke="#fff" stroke-width="1" stroke-dasharray="1,1" shape-rendering="crispEdges"/>
<rect x="572" y="386" width="2" height="41" fill="url(#chk)" />
<line x1="0" y1="426.5" x2="573" y2="426.5" stroke="#fff" stroke-width="1" stroke-dasharray="1,1" shape-rendering="crispEdges"/>
<line x1="573" y1="386.5" x2="1134" y2="386.5" stroke="#fff" stroke-width="1" stroke-dasharray="1,1" shape-rendering="crispEdges"/>
<line x1="1132.5" y1="2" x2="1132.5" y2="386" stroke="#fff" stroke-width="1" stroke-dasharray="1,1" shape-rendering="crispEdges"/>
<line x1="573" y1="2.5" x2="1133" y2="2.5" stroke="#fff" stroke-width="1" stroke-dasharray="1,1" shape-rendering="crispEdges"/>
<line x1="0" y1="2.5" x2="573" y2="2.5" stroke="#fff" stroke-width="1" stroke-dasharray="1,1" shape-rendering="crispEdges"/>
<line x1="1134.5" y1="388" x2="1134.5" y2="770" stroke="#fff" stroke-width="1" stroke-dasharray="1,1" shape-rendering="crispEdges"/>
<line x1="573" y1="770.5" x2="1135" y2="770.5" stroke="#fff" stroke-width="1" stroke-dasharray="1,1" shape-rendering="crispEdges"/>
<line x1="573.5" y1="427" x2="573.5" y2="870" stroke="#fff" stroke-width="1" stroke-dasharray="1,1" shape-rendering="crispEdges"/>
<line x1="5" y1="870.5" x2="574" y2="870.5" stroke="#fff" stroke-width="1" stroke-dasharray="1,1" shape-rendering="crispEdges"/>
<rect x="0" y="427" width="2" height="473" fill="#0000d0" />
<rect x="2" y="427" width="3" height="473" fill="url(#chk)" />
<rect x="3" y="428" width="1" height="472" fill="#fff0d0" />
<rect x="1045" y="771" width="77" height="5" fill="#fff" />
<line x1="1045" y1="770.5" x2="1122" y2="770.5" stroke="#000" stroke-width="1" stroke-dasharray="1,1"/>
<line x1="1045" y1="775.5" x2="1122" y2="775.5" stroke="#000" stroke-width="1" stroke-dasharray="1,1" stroke-dashoffset="1"/>
<rect x="1135" y="420" width="6" height="286" fill="#fff" />
<line x1="1135.5" y1="420" x2="1135.5" y2="706" stroke="#000" stroke-width="1" stroke-dasharray="1,1"/>
<line x1="1140.5" y1="420" x2="1140.5" y2="706" stroke="#0000c8" stroke-width="1" stroke-dasharray="1,1"/>
</svg>
</body></html>
